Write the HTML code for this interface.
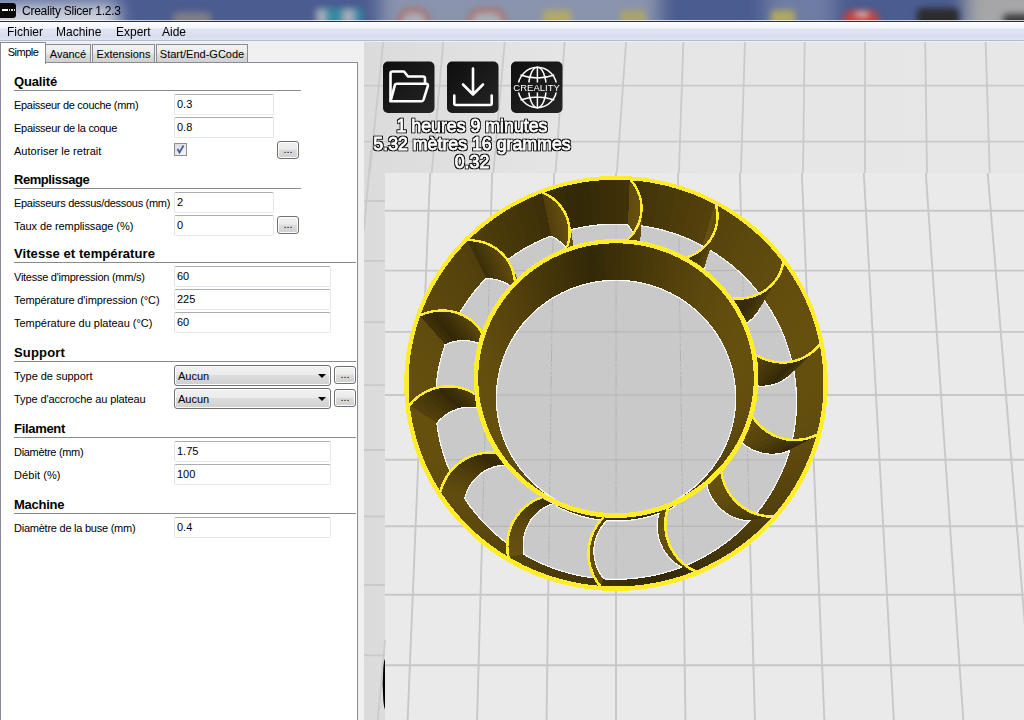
<!DOCTYPE html>
<html lang="fr">
<head>
<meta charset="utf-8">
<title>Creality Slicer 1.2.3</title>
<style>
*{box-sizing:border-box;margin:0;padding:0}
html,body{width:1024px;height:720px;overflow:hidden;background:#f0f0f0}
body{position:relative;font-family:"Liberation Sans",sans-serif;font-size:11px;color:#000}
.abs{position:absolute}
#titlebar{position:absolute;left:0;top:0;width:1024px;height:22px;overflow:hidden;background:#4b5c90}
#tbblobs,#tbbase{position:absolute;left:0;top:0;width:1024px;height:22px;filter:blur(3px)}
#tbbase{filter:blur(9px)}
#tbbase i{position:absolute;display:block}
#tbblobs i{position:absolute;display:block}
#tbline{position:absolute;left:0;top:20px;width:1024px;height:2px;background:linear-gradient(rgba(255,255,255,.75) 0,rgba(255,255,255,.75) 1px,#2e3038 1px,#2e3038 2px)}
#title{position:absolute;left:22px;top:3px;font-size:12px;line-height:16px;letter-spacing:-0.25px;color:#000;white-space:nowrap}
#appicon{position:absolute;left:-2px;top:3px;width:18px;height:15px;background:#0a0a0a;border-radius:3px}
#appicon:before{content:"";position:absolute;left:4px;top:6px;width:6px;height:2px;background:#fff}
#appicon:after{content:"";position:absolute;left:11px;top:6px;width:6px;height:2px;background:linear-gradient(90deg,#ddd 0,#ddd 1.500px,transparent 1.500px,transparent 2.500px,#ddd 2.500px,#ddd 4px,transparent 4px,transparent 5px,#ddd 5px)}
#menubar{position:absolute;left:0;top:22px;width:1024px;height:19px;background:linear-gradient(#fcfdff 0,#f3f5fc 6px,#e1e5f3 7px,#d9deef 14px,#dde2f1 17px,#dfe4f2 18px,#b4bbd0 18px,#b4bbd0 19px)}
#menubar span{position:absolute;top:3px;font-size:12px;line-height:14px;white-space:nowrap}
#tabs{position:absolute;left:0;top:41px;width:364px;height:22px;background:#f0f0f0}
.tab{position:absolute;top:3px;height:19px;border:1px solid #898c95;border-bottom:none;background:linear-gradient(#f2f2f2 0,#ebebeb 8px,#dddddd 9px,#cfcfcf 100%);font-size:11px;line-height:15px;text-align:center;white-space:nowrap;padding-top:2px}
.tab.sel{top:1px;height:22px;background:#fff;z-index:2;padding-top:2px}
#panel{position:absolute;left:0;top:62px;width:358px;height:658px;background:#fff;border:1px solid #898c95;border-bottom:none}
.h{position:absolute;left:14px;margin-top:1px;font-weight:bold;font-size:13px;line-height:16px;white-space:nowrap}
.hl{position:absolute;left:14px;height:1px;background:#8a8a8a}
.l{position:absolute;left:14px;font-size:11px;line-height:14px;white-space:nowrap;letter-spacing:-0.29px}
.in{position:absolute;left:174px;height:21px;border:1px solid #e3e9ef;border-top-color:#abadb3;border-left-color:#e2e3ea;border-radius:2px;background:#fff;font-size:11px;line-height:14px;padding:2px 0 0 2px;white-space:nowrap}
.w1{width:100px}.w2{width:157px}
.btn{position:absolute;width:22px;height:18px;border:1px solid #707070;border-radius:3px;background:linear-gradient(#f2f2f2 0,#ebebeb 45%,#dddddd 50%,#cfcfcf 100%);box-shadow:inset 0 0 0 1px #fcfcfc;font-size:11px;line-height:15px;text-align:center}
.sel2{position:absolute;left:174px;width:157px;height:21px;border:1px solid #707070;border-radius:3px;background:linear-gradient(#f2f2f2 0,#ebebeb 45%,#dddddd 50%,#cfcfcf 100%);box-shadow:inset 0 0 0 1px #fcfcfc;font-size:11px;line-height:14px;padding:3px 0 0 3px}
.sel2:after{content:"";position:absolute;right:4px;top:8px;border:4px solid transparent;border-top:4px solid #000;border-bottom:none}
#view{overflow:hidden}
</style>
</head>
<body>
<div id="titlebar">
  <div id="tbbase">
    <i style="left:-30px;top:3px;width:148px;height:60px;background:#d0d4de"></i>
    <i style="left:380px;top:-20px;width:280px;height:60px;background:#8a94ad"></i>
    <i style="left:765px;top:-20px;width:70px;height:60px;background:#6f7ca4"></i>
    <i style="left:965px;top:-20px;width:90px;height:60px;background:#a6a6a8"></i>
  </div>
  <div id="tbblobs">
    <i style="left:172px;top:12px;width:40px;height:16px;background:#7f7f86;border-radius:8px"></i>
    <i style="left:318px;top:8px;width:44px;height:18px;background:#3689a2;border-radius:4px"></i>
    <i style="left:316px;top:9px;width:11px;height:16px;background:#a4abb6"></i>
    <i style="left:342px;top:9px;width:13px;height:16px;background:#a4abb6"></i>
    <i style="left:398px;top:8px;width:32px;height:26px;background:#a9adb8;border:4px solid #ad6a64;border-radius:14px"></i>
    <i style="left:468px;top:8px;width:38px;height:26px;background:#a9adb8;border:4px solid #ad6a64;border-radius:14px"></i>
    <i style="left:543px;top:10px;width:28px;height:16px;background:#b1aa66;border-radius:3px"></i>
    <i style="left:620px;top:10px;width:26px;height:16px;background:#a8a36e;border-radius:3px"></i>
    <i style="left:771px;top:10px;width:24px;height:16px;background:#aea862;border-radius:3px"></i>
    <i style="left:843px;top:10px;width:36px;height:18px;background:#bd4540;border-radius:9px"></i>
    <i style="left:855px;top:12px;width:14px;height:5px;background:#e0c4c0;border-radius:3px"></i>
    <i style="left:917px;top:8px;width:42px;height:18px;background:#2c2c2e;border-radius:5px"></i>
    <i style="left:1003px;top:14px;width:30px;height:12px;background:#3c3c3e;border-radius:5px"></i>
  </div>
  <div id="tbline"></div>
  <div id="appicon"></div>
  <div id="title">Creality Slicer 1.2.3</div>
</div>
<div id="menubar">
  <span style="left:7px">Fichier</span>
  <span style="left:56px">Machine</span>
  <span style="left:116px">Expert</span>
  <span style="left:162px">Aide</span>
</div>
<div id="tabs">
  <div class="tab sel" style="left:0;width:46px;letter-spacing:-0.5px">Simple</div>
  <div class="tab" style="left:45px;width:46px">Avancé</div>
  <div class="tab" style="left:92px;width:63px">Extensions</div>
  <div class="tab" style="left:156px;width:92px">Start/End-GCode</div>
</div>
<div id="panel"></div>
<div id="form">
  <div class="h" style="top:73px;letter-spacing:-0.15px">Qualité</div><div class="hl" style="top:90px;width:287px"></div>
  <div class="l" style="top:98px;letter-spacing:-0.3px">Epaisseur de couche (mm)</div><div class="in w1" style="top:94px">0.3</div>
  <div class="l" style="top:121px;letter-spacing:-0.28px">Epaisseur de la coque</div><div class="in w1" style="top:117px">0.8</div>
  <div class="l" style="top:144px;letter-spacing:0.03px">Autoriser le retrait</div>
  <div class="abs" id="chk" style="left:174px;top:143px;width:13px;height:13px;border:1px solid #8e8f8f;background:linear-gradient(135deg,#d8dce0,#f6f6f6)"><svg width="11" height="11" viewBox="0 0 11 11" style="position:absolute;left:0;top:0"><path d="M2.5 5 L4.5 8.5 L8.5 1.5" fill="none" stroke="#4a5f97" stroke-width="1.8"/></svg></div>
  <div class="btn" style="left:277px;top:141px">...</div>

  <div class="h" style="top:171px;letter-spacing:-0.45px">Remplissage</div><div class="hl" style="top:188px;width:287px"></div>
  <div class="l" style="top:196px;letter-spacing:-0.3px">Epaisseurs dessus/dessous (mm)</div><div class="in w1" style="top:192px">2</div>
  <div class="l" style="top:219px;letter-spacing:-0.08px">Taux de remplissage (%)</div><div class="in w1" style="top:215px">0</div>
  <div class="btn" style="left:277px;top:216px">...</div>

  <div class="h" style="top:245px;letter-spacing:0.08px">Vitesse et température</div><div class="hl" style="top:262px;width:342px"></div>
  <div class="l" style="top:270px;letter-spacing:-0.26px">Vitesse d'impression (mm/s)</div><div class="in w2" style="top:266px">60</div>
  <div class="l" style="top:293px;letter-spacing:-0.12px">Température d'impression (°C)</div><div class="in w2" style="top:289px">225</div>
  <div class="l" style="top:316px;letter-spacing:-0.02px">Température du plateau (°C)</div><div class="in w2" style="top:312px">60</div>

  <div class="h" style="top:344px;letter-spacing:0.17px">Support</div><div class="hl" style="top:361px;width:342px"></div>
  <div class="l" style="top:369px;letter-spacing:-0.03px">Type de support</div><div class="sel2" style="top:365px">Aucun</div><div class="btn" style="left:334px;top:366px">...</div>
  <div class="l" style="top:392px;letter-spacing:-0.1px">Type d'accroche au plateau</div><div class="sel2" style="top:388px">Aucun</div><div class="btn" style="left:334px;top:389px">...</div>

  <div class="h" style="top:420px;letter-spacing:-0.31px">Filament</div><div class="hl" style="top:437px;width:342px"></div>
  <div class="l" style="top:445px;letter-spacing:-0.31px">Diamètre (mm)</div><div class="in w2" style="top:441px">1.75</div>
  <div class="l" style="top:468px;letter-spacing:0.07px">Débit (%)</div><div class="in w2" style="top:464px">100</div>

  <div class="h" style="top:496px;letter-spacing:-0.25px">Machine</div><div class="hl" style="top:513px;width:342px"></div>
  <div class="l" style="top:521px;letter-spacing:-0.24px">Diamètre de la buse (mm)</div><div class="in w2" style="top:517px">0.4</div>
</div>
<svg id="view" width="660" height="679" viewBox="364 41 660 679" style="position:absolute;left:364px;top:41px;display:block;will-change:transform">
<defs><linearGradient id="bgA" x1="0" x2="1" y1="0" y2="0"><stop offset="0" stop-color="#dbdbdb"/><stop offset="0.12" stop-color="#dfdfdf"/><stop offset="0.3" stop-color="#e5e5e5"/><stop offset="1" stop-color="#e7e7e7"/></linearGradient>
<linearGradient id="btn" x1="0" x2="1" y1="0" y2="1"><stop offset="0" stop-color="#0e0e0e"/><stop offset="1" stop-color="#262626"/></linearGradient></defs>
<rect x="364" y="41" width="660" height="679" fill="url(#bgA)"/>
<rect x="385" y="173" width="639" height="547" fill="#eaeaea"/>
<clipPath id="pl"><rect x="385" y="173" width="639" height="547"/></clipPath>
<path d="M385 210.8H1024M385 270.6H1024M385 331.9H1024M385 395.0H1024M385 459.8H1024M385 526.3H1024M385 594.8H1024M385 665.2H1024M369.3 152.5L337.2 737.6M431.0 152.5L406.9 737.6M492.7 152.5L476.6 737.6M554.3 152.5L546.3 737.6M616.0 152.5L616.0 737.6M677.7 152.5L685.7 737.6M739.3 152.5L755.4 737.6M801.0 152.5L825.1 737.6M862.7 152.5L894.8 737.6M924.4 152.5L964.5 737.6M986.0 152.5L1034.2 737.6" stroke="#c8c8c8" stroke-width="1.9" fill="none" clip-path="url(#pl)"/>
<path d="M364 85.7H1024M364 141.7H1024M383.4 41L369.7 173M443.4 41L431.7 173M504.8 41L493.3 173M564.6 41L555.5 173M626.1 41L616.8 173M683.4 41L678.9 173M745.0 41L740.9 173M804.7 41L803.0 173M865.1 41L865.0 173M925.2 41L927.0 173M985.6 41L989.7 173M364 201.0H385M364 260.8H385M364 322.1H385M364 385.2H385M364 450.0H385M364 516.5H385M364 585.0H385M364 655.4H385M371 150L364 230M385 640L377.8 720" stroke="#cacaca" stroke-width="1.8" fill="none"/>
<path d="M385 659Q384 660 383.300 668Q382 684 383.300 700Q384 708 385 709.500Z" fill="#000"/>
<rect x="364" y="41" width="660" height="1" fill="#efefef"/>
<g id="obj">
<clipPath id="fl"><polygon points="800.8,395.0 799.9,383.1 798.3,371.4 795.9,359.8 792.7,348.4 788.8,337.3 784.2,326.5 778.9,316.0 773.0,305.9 766.4,296.2 759.2,286.9 751.5,278.2 743.2,269.9 734.4,262.3 725.2,255.1 715.5,248.6 705.4,242.7 695.0,237.5 684.3,232.9 673.3,229.0 662.1,225.8 650.7,223.3 639.2,221.5 627.6,220.4 616.0,220.1 604.4,220.4 592.8,221.5 581.3,223.3 569.9,225.8 558.7,229.0 547.7,232.9 537.0,237.5 526.6,242.7 516.5,248.6 506.8,255.1 497.6,262.3 488.8,269.9 480.5,278.2 472.8,286.9 465.6,296.2 459.0,305.9 453.1,316.0 447.8,326.5 443.2,337.3 439.3,348.4 436.1,359.8 433.7,371.4 432.1,383.1 431.2,395.0 431.2,406.9 431.9,418.8 433.4,430.7 435.7,442.5 438.9,454.1 442.8,465.5 447.4,476.7 452.9,487.6 459.0,498.1 465.9,508.2 473.5,517.9 481.7,527.0 490.6,535.6 500.0,543.6 510.0,551.0 520.4,557.7 531.4,563.7 542.7,569.0 554.4,573.5 566.3,577.2 578.5,580.1 590.9,582.2 603.4,583.5 616.0,583.9 628.6,583.5 641.1,582.2 653.5,580.1 665.7,577.2 677.6,573.5 689.3,569.0 700.6,563.7 711.6,557.7 722.0,551.0 732.0,543.6 741.4,535.6 750.3,527.0 758.5,517.9 766.1,508.2 773.0,498.1 779.1,487.6 784.6,476.7 789.2,465.5 793.1,454.1 796.3,442.5 798.6,430.7 800.1,418.8 800.8,406.9"/></clipPath>
<polygon points="800.8,395.0 799.9,383.1 798.3,371.4 795.9,359.8 792.7,348.4 788.8,337.3 784.2,326.5 778.9,316.0 773.0,305.9 766.4,296.2 759.2,286.9 751.5,278.2 743.2,269.9 734.4,262.3 725.2,255.1 715.5,248.6 705.4,242.7 695.0,237.5 684.3,232.9 673.3,229.0 662.1,225.8 650.7,223.3 639.2,221.5 627.6,220.4 616.0,220.1 604.4,220.4 592.8,221.5 581.3,223.3 569.9,225.8 558.7,229.0 547.7,232.9 537.0,237.5 526.6,242.7 516.5,248.6 506.8,255.1 497.6,262.3 488.8,269.9 480.5,278.2 472.8,286.9 465.6,296.2 459.0,305.9 453.1,316.0 447.8,326.5 443.2,337.3 439.3,348.4 436.1,359.8 433.7,371.4 432.1,383.1 431.2,395.0 431.2,406.9 431.9,418.8 433.4,430.7 435.7,442.5 438.9,454.1 442.8,465.5 447.4,476.7 452.9,487.6 459.0,498.1 465.9,508.2 473.5,517.9 481.7,527.0 490.6,535.6 500.0,543.6 510.0,551.0 520.4,557.7 531.4,563.7 542.7,569.0 554.4,573.5 566.3,577.2 578.5,580.1 590.9,582.2 603.4,583.5 616.0,583.9 628.6,583.5 641.1,582.2 653.5,580.1 665.7,577.2 677.6,573.5 689.3,569.0 700.6,563.7 711.6,557.7 722.0,551.0 732.0,543.6 741.4,535.6 750.3,527.0 758.5,517.9 766.1,508.2 773.0,498.1 779.1,487.6 784.6,476.7 789.2,465.5 793.1,454.1 796.3,442.5 798.6,430.7 800.1,418.8 800.8,406.9" fill="#c9c9c9"/>
<g clip-path="url(#fl)" fill="none" stroke="#b4b4b4" stroke-width="1"><path d="M412.8 594.8L819.2 594.8M415.6 526.3L816.4 526.3M418.3 459.8L813.7 459.8M421.0 395.0L811.0 395.0M423.6 331.9L808.4 331.9M426.1 270.6L805.9 270.6M428.6 210.8L803.4 210.8"/><path d="M428.6 210.8L412.8 594.8M491.1 210.8L480.5 594.8M553.5 210.8L548.3 594.8M616.0 210.8L616.0 594.8M678.5 210.8L683.7 594.8M740.9 210.8L751.5 594.8M803.4 210.8L819.2 594.8" stroke-dasharray="14 1.500 3 1.500 1.500 1.500 3 1.500"/></g>
<path d="M616.0 223.5L623.6 223.7M608.4 223.7L616.0 223.5M623.6 223.7L631.2 224.1M600.8 224.1L608.4 223.7M593.2 224.9L600.8 224.1M631.2 224.1L638.8 224.9M638.8 224.9L646.3 226.0M585.7 226.0L593.2 224.9M646.3 226.0L653.8 227.4M578.2 227.4L585.7 226.0M653.8 227.4L661.2 229.1M570.8 229.1L578.2 227.4M630.5 227.5L628.0 224.3M661.2 229.1L668.5 231.2M563.5 231.2L570.8 229.1M668.5 231.2L675.8 233.5M556.2 233.5L563.5 231.2M675.8 233.5L682.9 236.1M549.1 236.1L556.2 233.5M632.7 230.9L630.5 227.5M682.9 236.1L690.0 239.0M542.0 239.0L549.1 236.1M555.0 237.5L551.3 235.7M690.0 239.0L696.9 242.2M535.1 242.2L542.0 239.0M634.5 234.6L632.7 230.9M696.9 242.2L703.6 245.7M528.4 245.7L535.1 242.2M558.5 239.8L555.0 237.5M703.6 245.7L710.3 249.5M521.7 249.5L528.4 245.7M703.4 249.6L702.5 245.6M635.8 238.4L634.5 234.6M710.3 249.5L716.7 253.6M515.3 253.6L521.7 249.5M561.8 242.3L558.5 239.8M716.7 253.6L723.0 257.9M509.0 257.9L515.3 253.6M703.9 253.6L703.4 249.6M564.7 245.2L561.8 242.3M636.8 242.4L635.8 238.4M723.0 257.9L729.1 262.5M502.9 262.5L509.0 257.9M497.0 267.3L502.9 262.5M729.1 262.5L735.0 267.3M567.3 248.4L564.7 245.2M703.9 257.7L703.9 253.6M637.3 246.4L636.8 242.4M735.0 267.3L740.7 272.4M491.3 272.4L497.0 267.3M569.5 251.9L567.3 248.4M703.4 261.7L703.9 257.7M740.7 272.4L746.1 277.8M485.9 277.8L491.3 272.4M637.3 250.4L637.3 246.4M490.5 278.1L486.2 278.0M746.1 277.8L751.4 283.3M480.6 283.3L485.9 277.8M571.3 255.5L569.5 251.9M702.5 265.7L703.4 261.7M494.7 278.7L490.5 278.1M639.0 254.8L639.4 250.5M751.4 283.3L756.4 289.1M475.6 289.1L480.6 283.3M498.8 279.7L494.7 278.7M572.7 259.3L571.3 255.5M703.2 270.3L704.6 266.3M756.4 289.1L761.1 295.1M470.9 295.1L475.6 289.1M638.1 259.0L639.0 254.8M502.8 281.1L498.8 279.7M761.1 295.1L765.6 301.3M466.4 301.3L470.9 295.1M573.7 263.3L572.7 259.3M701.3 274.2L703.2 270.3M760.5 300.2L761.5 296.2M506.6 282.9L502.8 281.1M636.7 263.0L638.1 259.0M765.6 301.3L769.9 307.7M462.1 307.7L466.4 301.3M576.4 267.2L575.8 262.9M510.2 285.1L506.6 282.9M759.1 304.1L760.5 300.2M699.0 277.9L701.3 274.2M769.9 307.7L773.8 314.2M458.2 314.2L462.1 307.7M634.8 267.0L636.7 263.0M513.5 287.6L510.2 285.1M576.4 271.5L576.4 267.2M757.3 307.8L759.1 304.1M696.3 281.3L699.0 277.9M773.8 314.2L777.5 321.0M454.5 321.0L458.2 314.2M632.6 270.7L634.8 267.0M516.5 290.5L513.5 287.6M576.0 275.8L576.4 271.5M777.5 321.0L780.8 327.9M451.2 327.9L454.5 321.0M756.9 312.6L759.2 308.9M693.2 284.4L696.3 281.3M629.9 274.1L632.6 270.7M519.1 293.7L516.5 290.5M780.8 327.9L783.9 334.9M448.1 334.9L451.2 327.9M575.1 280.0L576.0 275.8M689.8 287.2L693.2 284.4M626.9 277.3L629.9 274.1M754.1 316.0L756.9 312.6M521.4 297.2L519.1 293.7M445.3 342.1L448.1 334.9M783.9 334.9L786.7 342.1M686.1 289.6L689.8 287.2M573.8 284.2L575.1 280.0M616.0 279.6L621.1 279.8M610.9 279.8L616.0 279.6M751.0 319.1L754.1 316.0M621.1 279.8L626.2 280.1M605.8 280.1L610.9 279.8M626.2 280.1L631.3 280.6M600.7 280.6L605.8 280.1M631.3 280.6L636.4 281.4M595.6 281.4L600.7 280.6M636.4 281.4L641.4 282.3M590.6 282.3L595.6 281.4M641.4 282.3L646.4 283.5M585.6 283.5L590.6 282.3M682.1 291.6L686.1 289.6M523.3 300.9L521.4 297.2M786.7 342.1L789.1 349.4M442.9 349.4L445.3 342.1M449.0 342.5L445.0 344.2M646.4 283.5L651.3 284.9M580.7 284.9L585.6 283.5M651.3 284.9L656.2 286.4M575.8 286.4L580.7 284.9M453.2 341.2L449.0 342.5M656.2 286.4L661.0 288.2M571.0 288.2L575.8 286.4M747.5 321.8L751.0 319.1M677.9 293.3L682.1 291.6M661.0 288.2L665.7 290.2M566.3 290.2L571.0 288.2M457.5 340.4L453.2 341.2M789.1 349.4L791.3 356.8M440.7 356.8L442.9 349.4M526.8 304.1L525.3 300.0M665.7 290.2L670.3 292.4M561.7 292.4L566.3 290.2M670.3 292.4L674.9 294.8M557.1 294.8L561.7 292.4M461.8 339.9L457.5 340.4M743.7 324.2L747.5 321.8M674.9 294.8L679.3 297.3M552.7 297.3L557.1 294.8M466.1 340.0L461.8 339.9M791.3 356.8L793.1 364.3M438.9 364.3L440.7 356.8M679.3 297.3L683.6 300.1M548.4 300.1L552.7 297.3M527.9 308.3L526.8 304.1M739.7 326.2L743.7 324.2M683.6 300.1L687.8 303.0M544.2 303.0L548.4 300.1M470.4 340.5L466.1 340.0M687.8 303.0L691.8 306.1M540.2 306.1L544.2 303.0M793.1 364.3L794.6 371.9M437.4 371.9L438.9 364.3M528.5 312.6L527.9 308.3M735.5 327.7L739.7 326.2M691.8 306.1L695.8 309.4M536.2 309.4L540.2 306.1M474.6 341.4L470.4 340.5M790.6 370.9L793.3 367.7M695.8 309.4L699.6 312.8M532.4 312.8L536.2 309.4M794.6 371.9L795.7 379.5M436.3 379.5L437.4 371.9M731.1 328.8L735.5 327.7M478.7 342.7L474.6 341.4M699.6 312.8L703.2 316.4M528.8 316.4L532.4 312.8M787.6 373.9L790.6 370.9M726.6 329.4L731.1 328.8M703.2 316.4L706.7 320.2M525.3 320.2L528.8 316.4M482.6 344.5L478.7 342.7M795.7 379.5L796.5 387.2M435.5 387.2L436.3 379.5M722.0 329.6L726.6 329.4M706.7 320.2L710.0 324.1M522.0 324.1L525.3 320.2M785.5 378.2L789.1 375.5M717.5 329.2L722.0 329.6M486.2 346.7L482.6 344.5M710.0 324.1L713.1 328.1M518.9 328.1L522.0 324.1M796.5 387.2L797.0 395.0M435.0 395.0L435.5 387.2M713.1 328.1L716.1 332.3M515.9 332.3L518.9 328.1M781.7 380.6L785.5 378.2M489.6 349.3L486.2 346.7M716.1 332.3L718.9 336.6M513.1 336.6L515.9 332.3M797.0 395.0L797.1 402.8M434.9 402.8L435.0 395.0M777.6 382.5L781.7 380.6M492.7 352.2L489.6 349.3M718.9 336.6L721.5 341.0M510.5 341.0L513.1 336.6M797.1 402.8L796.9 410.6M435.1 410.6L434.9 402.8M721.5 341.0L723.9 345.6M508.1 345.6L510.5 341.0M773.3 384.0L777.6 382.5M495.5 355.4L492.7 352.2M723.9 345.6L726.1 350.2M505.9 350.2L508.1 345.6M768.8 385.0L773.3 384.0M796.9 410.6L796.3 418.3M435.7 418.3L435.1 410.6M497.8 358.9L495.5 355.4M726.1 350.2L728.0 354.9M504.0 354.9L505.9 350.2M764.3 385.6L768.8 385.0M502.2 359.7L504.0 354.9M728.0 354.9L729.8 359.7M796.3 418.3L795.4 426.1M436.6 426.1L435.7 418.3M439.6 419.3L436.6 422.6M442.9 416.3L439.6 419.3M759.6 385.6L764.3 385.6M729.8 359.7L731.4 364.6M500.6 364.6L502.2 359.7M446.5 413.7L442.9 416.3M450.3 411.4L446.5 413.7M755.0 385.2L759.6 385.6M795.4 426.1L794.2 433.8M437.8 433.8L436.6 426.1M731.4 364.6L732.8 369.5M499.2 369.5L500.6 364.6M454.3 409.6L450.3 411.4M750.5 384.3L755.0 385.2M458.5 408.1L454.3 409.6M732.8 369.5L733.9 374.6M498.1 374.6L499.2 369.5M746.1 382.9L750.5 384.3M794.2 433.8L792.5 441.5M439.5 441.5L437.8 433.8M462.9 407.2L458.5 408.1M741.8 381.1L746.1 382.9M737.7 378.9L741.8 381.1M733.9 374.6L734.8 379.6M497.2 379.6L498.1 374.6M467.2 406.6L462.9 407.2M441.4 449.1L439.5 441.5M792.5 441.5L790.6 449.1M471.6 406.6L467.2 406.6M734.8 379.6L735.5 384.7M496.5 384.7L497.2 379.6M787.6 450.7L791.8 448.9M476.0 407.0L471.6 406.6M735.5 384.7L736.0 389.8M496.0 389.8L496.5 384.7M790.6 449.1L788.3 456.6M443.7 456.6L441.4 449.1M480.3 407.9L476.0 407.0M783.2 452.2L787.6 450.7M736.0 389.8L736.3 395.0M495.7 395.0L496.0 389.8M446.3 464.1L443.7 456.6M788.3 456.6L785.7 464.1M484.4 409.2L480.3 407.9M736.3 395.0L736.3 400.2M495.7 400.2L495.7 395.0M778.7 453.1L783.2 452.2M488.4 410.9L484.4 409.2M785.7 464.1L782.7 471.4M449.3 471.4L446.3 464.1M736.3 400.2L736.1 405.3M495.9 405.3L495.7 400.2M774.0 453.6L778.7 453.1M492.2 413.1L488.4 410.9M736.1 405.3L735.6 410.5M496.4 410.5L495.9 405.3M769.4 453.5L774.0 453.6M782.7 471.4L779.4 478.6M452.6 478.6L449.3 471.4M735.6 410.5L734.9 415.6M497.1 415.6L496.4 410.5M764.7 453.0L769.4 453.5M779.4 478.6L775.7 485.7M456.3 485.7L452.6 478.6M760.1 452.0L764.7 453.0M734.9 415.6L734.0 420.7M498.0 420.7L497.1 415.6M755.6 450.5L760.1 452.0M734.0 420.7L732.9 425.8M499.1 425.8L498.0 420.7M775.7 485.7L771.8 492.6M460.2 492.6L456.3 485.7M751.3 448.5L755.6 450.5M747.3 446.1L751.3 448.5M500.4 430.8L499.1 425.8M732.9 425.8L731.6 430.8M743.5 443.3L747.3 446.1M464.5 499.3L460.2 492.6M771.8 492.6L767.5 499.3M740.0 440.2L743.5 443.3M734.1 432.8L736.9 436.6M736.9 436.6L740.0 440.2M465.5 493.7L464.2 498.0M467.2 489.5L465.5 493.7M731.6 430.8L730.0 435.8M502.0 435.8L500.4 430.8M469.3 485.5L467.2 489.5M471.8 481.7L469.3 485.5M474.8 478.3L471.8 481.7M767.5 499.3L763.0 505.9M469.0 505.9L464.5 499.3M478.0 475.1L474.8 478.3M730.0 435.8L728.2 440.7M503.8 440.7L502.0 435.8M481.6 472.3L478.0 475.1M485.4 469.9L481.6 472.3M763.0 505.9L758.1 512.2M473.9 512.2L469.0 505.9M728.2 440.7L726.1 445.5M505.9 445.5L503.8 440.7M489.4 468.0L485.4 469.9M493.6 466.4L489.4 468.0M726.1 445.5L723.9 450.2M508.1 450.2L505.9 445.5M758.1 512.2L752.9 518.3M479.1 518.3L473.9 512.2M498.0 465.3L493.6 466.4M502.4 464.7L498.0 465.3M723.9 450.2L721.5 454.9M510.5 454.9L508.1 450.2M747.9 520.2L752.6 520.4M752.9 518.3L747.5 524.3M484.5 524.3L479.1 518.3M506.9 464.5L502.4 464.7M721.5 454.9L718.8 459.4M513.2 459.4L510.5 454.9M743.2 519.6L747.9 520.2M511.3 464.8L506.9 464.5M747.5 524.3L741.8 529.9M490.2 529.9L484.5 524.3M718.8 459.4L715.9 463.8M516.1 463.8L513.2 459.4M738.6 518.4L743.2 519.6M741.8 529.9L735.8 535.3M496.2 535.3L490.2 529.9M519.1 468.1L516.1 463.8M715.9 463.8L712.9 468.1M734.1 516.8L738.6 518.4M729.8 514.7L734.1 516.8M712.9 468.1L709.6 472.2M522.4 472.2L519.1 468.1M735.8 535.3L729.6 540.5M502.4 540.5L496.2 535.3M725.7 512.1L729.8 514.7M709.6 472.2L706.2 476.2M525.8 476.2L522.4 472.2M721.9 509.2L725.7 512.1M729.6 540.5L723.1 545.4M508.9 545.4L502.4 540.5M718.5 505.8L721.9 509.2M706.2 476.2L702.6 480.1M529.4 480.1L525.8 476.2M706.6 480.3L707.4 485.0M715.4 502.1L718.5 505.8M707.4 485.0L708.7 489.5M712.7 498.2L715.4 502.1M708.7 489.5L710.5 494.0M710.5 494.0L712.7 498.2M723.1 545.4L716.4 550.0M515.6 550.0L508.9 545.4M702.6 480.1L698.8 483.8M533.2 483.8L529.4 480.1M716.4 550.0L709.5 554.3M522.5 554.3L515.6 550.0M698.8 483.8L694.8 487.3M537.2 487.3L533.2 483.8M522.5 545.3L522.9 549.9M522.9 549.9L523.6 554.4M522.7 540.8L522.5 545.3M523.4 536.2L522.7 540.8M524.5 531.8L523.4 536.2M709.5 554.3L702.5 558.3M529.5 558.3L522.5 554.3M694.8 487.3L690.7 490.7M541.3 490.7L537.2 487.3M526.1 527.5L524.5 531.8M528.1 523.4L526.1 527.5M530.5 519.5L528.1 523.4M533.3 515.9L530.5 519.5M690.7 490.7L686.4 493.9M545.6 493.9L541.3 490.7M702.5 558.3L695.2 561.9M536.8 561.9L529.5 558.3M536.5 512.7L533.3 515.9M540.0 509.7L536.5 512.7M686.4 493.9L682.0 496.9M550.0 496.9L545.6 493.9M543.8 507.2L540.0 509.7M695.2 561.9L687.8 565.3M544.2 565.3L536.8 561.9M547.8 505.1L543.8 507.2M682.0 496.9L677.5 499.6M554.5 499.6L550.0 496.9M552.0 503.5L547.8 505.1M687.8 565.3L680.2 568.3M551.8 568.3L544.2 565.3M680.2 565.7L684.4 567.9M680.2 568.3L672.4 571.0M559.6 571.0L551.8 568.3M676.1 563.0L680.2 565.7M674.7 505.9L669.8 508.4M562.2 508.4L557.3 505.9M672.4 559.9L676.1 563.0M672.4 571.0L664.6 573.3M567.4 573.3L559.6 571.0M669.8 508.4L664.7 510.7M567.3 510.7L562.2 508.4M669.1 556.4L672.4 559.9M664.6 573.3L656.7 575.3M575.3 575.3L567.4 573.3M666.1 552.6L669.1 556.4M664.7 510.7L659.6 512.7M572.4 512.7L567.3 510.7M656.7 575.3L648.6 577.0M583.4 577.0L575.3 575.3M663.5 548.5L666.1 552.6M660.3 511.3L658.9 515.8M591.5 578.2L583.4 577.0M648.6 577.0L640.5 578.2M659.6 512.7L654.3 514.5M577.7 514.5L572.4 512.7M661.4 544.1L663.5 548.5M658.9 515.8L658.1 520.5M640.5 578.2L632.4 579.1M599.6 579.1L591.5 578.2M659.7 539.6L661.4 544.1M658.1 520.5L657.7 525.3M658.6 534.9L659.7 539.6M632.4 579.1L624.2 579.7M607.8 579.7L599.6 579.1M657.7 525.3L657.9 530.1M657.9 530.1L658.6 534.9M654.3 514.5L649.0 516.1M583.0 516.1L577.7 514.5M624.2 579.7L616.0 579.9M616.0 579.9L607.8 579.7M600.4 575.2L603.1 579.0M598.1 571.2L600.4 575.2M649.0 516.1L643.6 517.4M588.4 517.4L583.0 516.1M596.2 567.0L598.1 571.2M594.8 562.6L596.2 567.0M643.6 517.4L638.1 518.5M593.9 518.5L588.4 517.4M593.8 558.1L594.8 562.6M593.3 553.6L593.8 558.1M638.1 518.5L632.7 519.3M599.3 519.3L593.9 518.5M593.3 549.0L593.3 553.6M593.8 544.4L593.3 549.0M632.7 519.3L627.1 519.9M604.9 519.9L599.3 519.3M594.8 539.9L593.8 544.4M596.2 535.6L594.8 539.9M598.1 531.4L596.2 535.6M627.1 519.9L621.6 520.3M610.4 520.3L604.9 519.9M606.1 520.5L603.1 523.8M600.4 527.5L598.1 531.4M603.1 523.8L600.4 527.5M621.6 520.3L616.0 520.4M616.0 520.4L610.4 520.3" stroke="#fff" stroke-width="2.2" stroke-linecap="round" fill="none"/>
<g shape-rendering="crispEdges">
<path d="M616.0 223.5L623.6 223.7L624.7 180.0L616.0 179.8Z" fill="#3e3109"/>
<path d="M608.4 223.7L616.0 223.5L616.0 179.8L607.3 180.0Z" fill="#3c2f08"/>
<path d="M623.6 223.7L631.2 224.1L633.3 180.5L624.7 180.0Z" fill="#403209"/>
<path d="M600.8 224.1L608.4 223.7L607.3 180.0L598.7 180.5Z" fill="#3a2d08"/>
<path d="M593.2 224.9L600.8 224.1L598.7 180.5L590.1 181.4Z" fill="#372c08"/>
<path d="M631.2 224.1L638.8 224.9L641.9 181.4L633.3 180.5Z" fill="#423409"/>
<path d="M638.8 224.9L646.3 226.0L650.5 182.6L641.9 181.4Z" fill="#44360a"/>
<path d="M585.7 226.0L593.2 224.9L590.1 181.4L581.5 182.6Z" fill="#352a08"/>
<path d="M646.3 226.0L653.8 227.4L659.1 184.2L650.5 182.6Z" fill="#46370a"/>
<path d="M578.2 227.4L585.7 226.0L581.5 182.6L572.9 184.2Z" fill="#332807"/>
<path d="M653.8 227.4L661.2 229.1L667.5 186.2L659.1 184.2Z" fill="#48390a"/>
<path d="M570.8 229.1L578.2 227.4L572.9 184.2L564.5 186.2Z" fill="#352a08"/>
<path d="M630.5 227.5L628.0 224.3L629.7 180.7L632.6 184.3Z" fill="#604c0e"/>
<path d="M661.2 229.1L668.5 231.2L675.9 188.4L667.5 186.2Z" fill="#4a3a0a"/>
<path d="M563.5 231.2L570.8 229.1L564.5 186.2L556.1 188.4Z" fill="#372c08"/>
<path d="M668.5 231.2L675.8 233.5L684.1 191.1L675.9 188.4Z" fill="#4c3c0b"/>
<path d="M556.2 233.5L563.5 231.2L556.1 188.4L547.9 191.1Z" fill="#392d08"/>
<path d="M675.8 233.5L682.9 236.1L692.3 194.0L684.1 191.1Z" fill="#4e3d0b"/>
<path d="M549.1 236.1L556.2 233.5L547.9 191.1L539.7 194.0Z" fill="#3c2f08"/>
<path d="M632.7 230.9L630.5 227.5L632.6 184.3L635.0 188.2Z" fill="#624d0e"/>
<path d="M682.9 236.1L690.0 239.0L700.3 197.3L692.3 194.0Z" fill="#503f0b"/>
<path d="M542.0 239.0L549.1 236.1L539.7 194.0L531.7 197.3Z" fill="#3e3109"/>
<path d="M555.0 237.5L551.3 235.7L542.3 193.6L546.5 195.7Z" fill="#52410c"/>
<path d="M690.0 239.0L696.9 242.2L708.2 201.0L700.3 197.3Z" fill="#52400c"/>
<path d="M535.1 242.2L542.0 239.0L531.7 197.3L523.8 201.0Z" fill="#403209"/>
<path d="M634.5 234.6L632.7 230.9L635.0 188.2L637.1 192.3Z" fill="#644f0e"/>
<path d="M696.9 242.2L703.6 245.7L715.9 204.9L708.2 201.0Z" fill="#53420c"/>
<path d="M528.4 245.7L535.1 242.2L523.8 201.0L516.1 204.9Z" fill="#423409"/>
<path d="M558.5 239.8L555.0 237.5L546.5 195.7L550.5 198.2Z" fill="#56440c"/>
<path d="M703.6 245.7L710.3 249.5L723.5 209.2L715.9 204.9Z" fill="#55430c"/>
<path d="M521.7 249.5L528.4 245.7L516.1 204.9L508.5 209.2Z" fill="#44360a"/>
<path d="M703.4 249.6L702.5 245.6L714.7 204.8L715.7 209.3Z" fill="#65500e"/>
<path d="M635.8 238.4L634.5 234.6L637.1 192.3L638.6 196.7Z" fill="#654f0e"/>
<path d="M710.3 249.5L716.7 253.6L730.8 213.8L723.5 209.2Z" fill="#56440c"/>
<path d="M515.3 253.6L521.7 249.5L508.5 209.2L501.2 213.8Z" fill="#46370a"/>
<path d="M561.8 242.3L558.5 239.8L550.5 198.2L554.2 201.1Z" fill="#5a470d"/>
<path d="M716.7 253.6L723.0 257.9L738.0 218.7L730.8 213.8Z" fill="#58450c"/>
<path d="M509.0 257.9L515.3 253.6L501.2 213.8L494.0 218.7Z" fill="#48390a"/>
<path d="M703.9 253.6L703.4 249.6L715.7 209.3L716.2 213.8Z" fill="#654f0e"/>
<path d="M564.7 245.2L561.8 242.3L554.2 201.1L557.5 204.4Z" fill="#5d490d"/>
<path d="M636.8 242.4L635.8 238.4L638.6 196.7L639.7 201.1Z" fill="#65500e"/>
<path d="M723.0 257.9L729.1 262.5L745.0 223.9L738.0 218.7Z" fill="#59460d"/>
<path d="M502.9 262.5L509.0 257.9L494.0 218.7L487.0 223.9Z" fill="#4a3a0a"/>
<path d="M497.0 267.3L502.9 262.5L487.0 223.9L480.3 229.3Z" fill="#4c3c0b"/>
<path d="M729.1 262.5L735.0 267.3L751.7 229.3L745.0 223.9Z" fill="#5b480d"/>
<path d="M567.3 248.4L564.7 245.2L557.5 204.4L560.5 208.0Z" fill="#604b0e"/>
<path d="M703.9 257.7L703.9 253.6L716.2 213.8L716.2 218.4Z" fill="#644f0e"/>
<path d="M637.3 246.4L636.8 242.4L639.7 201.1L640.2 205.6Z" fill="#654f0e"/>
<path d="M735.0 267.3L740.7 272.4L758.2 235.1L751.7 229.3Z" fill="#5c490d"/>
<path d="M491.3 272.4L497.0 267.3L480.3 229.3L473.8 235.1Z" fill="#4e3d0b"/>
<path d="M569.5 251.9L567.3 248.4L560.5 208.0L563.0 211.8Z" fill="#624d0e"/>
<path d="M703.4 261.7L703.9 257.7L716.2 218.4L715.7 223.0Z" fill="#624e0e"/>
<path d="M740.7 272.4L746.1 277.8L764.5 241.1L758.2 235.1Z" fill="#5d490d"/>
<path d="M485.9 277.8L491.3 272.4L473.8 235.1L467.5 241.1Z" fill="#503f0b"/>
<path d="M637.3 250.4L637.3 246.4L640.2 205.6L640.3 210.2Z" fill="#644f0e"/>
<path d="M490.5 278.1L486.2 278.0L467.9 241.4L472.8 241.5Z" fill="#3e3109"/>
<path d="M746.1 277.8L751.4 283.3L770.5 247.4L764.5 241.1Z" fill="#5e4a0d"/>
<path d="M480.6 283.3L485.9 277.8L467.5 241.1L461.5 247.4Z" fill="#51400b"/>
<path d="M571.3 255.5L569.5 251.9L563.0 211.8L565.1 216.0Z" fill="#634e0e"/>
<path d="M702.5 265.7L703.4 261.7L715.7 223.0L714.7 227.5Z" fill="#604c0e"/>
<path d="M494.7 278.7L490.5 278.1L472.8 241.5L477.6 242.2Z" fill="#43350a"/>
<path d="M639.0 254.8L639.4 250.5L642.7 210.3L642.2 215.1Z" fill="#634e0e"/>
<path d="M751.4 283.3L756.4 289.1L776.3 254.0L770.5 247.4Z" fill="#5f4b0d"/>
<path d="M475.6 289.1L480.6 283.3L461.5 247.4L455.7 254.0Z" fill="#53420c"/>
<path d="M498.8 279.7L494.7 278.7L477.6 242.2L482.3 243.3Z" fill="#48390a"/>
<path d="M572.7 259.3L571.3 255.5L565.1 216.0L566.6 220.3Z" fill="#654f0e"/>
<path d="M703.2 270.3L704.6 266.3L717.1 228.1L715.4 232.7Z" fill="#5e4a0d"/>
<path d="M756.4 289.1L761.1 295.1L781.7 260.8L776.3 254.0Z" fill="#604c0e"/>
<path d="M470.9 295.1L475.6 289.1L455.7 254.0L450.3 260.8Z" fill="#55430c"/>
<path d="M638.1 259.0L639.0 254.8L642.2 215.1L641.2 219.9Z" fill="#614c0e"/>
<path d="M502.8 281.1L498.8 279.7L482.3 243.3L486.8 244.9Z" fill="#4d3d0b"/>
<path d="M761.1 295.1L765.6 301.3L786.9 267.8L781.7 260.8Z" fill="#614d0e"/>
<path d="M466.4 301.3L470.9 295.1L450.3 260.8L445.1 267.8Z" fill="#56440c"/>
<path d="M573.7 263.3L572.7 259.3L566.6 220.3L567.7 224.8Z" fill="#65500e"/>
<path d="M701.3 274.2L703.2 270.3L715.4 232.7L713.3 237.1Z" fill="#5b480d"/>
<path d="M760.5 300.2L761.5 296.2L782.1 262.1L781.0 266.6Z" fill="#604c0e"/>
<path d="M506.6 282.9L502.8 281.1L486.8 244.9L491.2 246.9Z" fill="#51400c"/>
<path d="M636.7 263.0L638.1 259.0L641.2 219.9L639.6 224.5Z" fill="#5f4b0d"/>
<path d="M765.6 301.3L769.9 307.7L791.7 275.0L786.9 267.8Z" fill="#624d0e"/>
<path d="M462.1 307.7L466.4 301.3L445.1 267.8L440.3 275.0Z" fill="#58450c"/>
<path d="M576.4 267.2L575.8 262.9L570.2 224.3L570.8 229.2Z" fill="#65500e"/>
<path d="M510.2 285.1L506.6 282.9L491.2 246.9L495.2 249.4Z" fill="#56430c"/>
<path d="M759.1 304.1L760.5 300.2L781.0 266.6L779.5 271.0Z" fill="#5d4a0d"/>
<path d="M699.0 277.9L701.3 274.2L713.3 237.1L710.7 241.3Z" fill="#58450c"/>
<path d="M769.9 307.7L773.8 314.2L796.3 282.5L791.7 275.0Z" fill="#634e0e"/>
<path d="M458.2 314.2L462.1 307.7L440.3 275.0L435.7 282.5Z" fill="#59460d"/>
<path d="M634.8 267.0L636.7 263.0L639.6 224.5L637.5 228.9Z" fill="#5c480d"/>
<path d="M513.5 287.6L510.2 285.1L495.2 249.4L499.0 252.3Z" fill="#59460d"/>
<path d="M576.4 271.5L576.4 267.2L570.8 229.2L570.9 234.0Z" fill="#644f0e"/>
<path d="M757.3 307.8L759.1 304.1L779.5 271.0L777.4 275.2Z" fill="#5a470d"/>
<path d="M696.3 281.3L699.0 277.9L710.7 241.3L707.6 245.1Z" fill="#54420c"/>
<path d="M773.8 314.2L777.5 321.0L800.5 290.1L796.3 282.5Z" fill="#634e0e"/>
<path d="M454.5 321.0L458.2 314.2L435.7 282.5L431.5 290.1Z" fill="#5b470d"/>
<path d="M632.6 270.7L634.8 267.0L637.5 228.9L634.9 233.1Z" fill="#58460c"/>
<path d="M516.5 290.5L513.5 287.6L499.0 252.3L502.4 255.6Z" fill="#5c490d"/>
<path d="M576.0 275.8L576.4 271.5L570.9 234.0L570.4 238.9Z" fill="#634e0e"/>
<path d="M777.5 321.0L780.8 327.9L804.4 297.9L800.5 290.1Z" fill="#644f0e"/>
<path d="M451.2 327.9L454.5 321.0L431.5 290.1L427.6 297.9Z" fill="#5c480d"/>
<path d="M756.9 312.6L759.2 308.9L779.6 276.4L776.9 280.6Z" fill="#57440c"/>
<path d="M693.2 284.4L696.3 281.3L707.6 245.1L704.1 248.7Z" fill="#503f0b"/>
<path d="M629.9 274.1L632.6 270.7L634.9 233.1L631.9 237.0Z" fill="#55430c"/>
<path d="M519.1 293.7L516.5 290.5L502.4 255.6L505.4 259.2Z" fill="#5f4b0d"/>
<path d="M780.8 327.9L783.9 334.9L808.0 305.9L804.4 297.9Z" fill="#644f0e"/>
<path d="M448.1 334.9L451.2 327.9L427.6 297.9L424.0 305.9Z" fill="#5d490d"/>
<path d="M575.1 280.0L576.0 275.8L570.4 238.9L569.4 243.7Z" fill="#614d0e"/>
<path d="M689.8 287.2L693.2 284.4L704.1 248.7L700.3 251.8Z" fill="#4b3b0b"/>
<path d="M626.9 277.3L629.9 274.1L631.9 237.0L628.4 240.6Z" fill="#503f0b"/>
<path d="M754.1 316.0L756.9 312.6L776.9 280.6L773.8 284.4Z" fill="#53410c"/>
<path d="M521.4 297.2L519.1 293.7L505.4 259.2L508.0 263.1Z" fill="#614d0e"/>
<path d="M445.3 342.1L448.1 334.9L424.0 305.9L420.8 314.1Z" fill="#5e4a0d"/>
<path d="M783.9 334.9L786.7 342.1L811.2 314.1L808.0 305.9Z" fill="#654f0e"/>
<path d="M686.1 289.6L689.8 287.2L700.3 251.8L696.0 254.6Z" fill="#46370a"/>
<path d="M573.8 284.2L575.1 280.0L569.4 243.7L567.8 248.4Z" fill="#5f4b0d"/>
<path d="M616.0 279.6L621.1 279.8L621.8 243.4L616.0 243.3Z" fill="#3e3109"/>
<path d="M610.9 279.8L616.0 279.6L616.0 243.3L610.2 243.4Z" fill="#3c2f08"/>
<path d="M751.0 319.1L754.1 316.0L773.8 284.4L770.2 287.9Z" fill="#4f3e0b"/>
<path d="M621.1 279.8L626.2 280.1L627.7 243.8L621.8 243.4Z" fill="#403209"/>
<path d="M605.8 280.1L610.9 279.8L610.2 243.4L604.3 243.8Z" fill="#3a2d08"/>
<path d="M626.2 280.1L631.3 280.6L633.5 244.4L627.7 243.8Z" fill="#423409"/>
<path d="M600.7 280.6L605.8 280.1L604.3 243.8L598.5 244.4Z" fill="#372c08"/>
<path d="M631.3 280.6L636.4 281.4L639.3 245.2L633.5 244.4Z" fill="#44360a"/>
<path d="M595.6 281.4L600.7 280.6L598.5 244.4L592.7 245.2Z" fill="#352a08"/>
<path d="M636.4 281.4L641.4 282.3L645.0 246.3L639.3 245.2Z" fill="#46370a"/>
<path d="M590.6 282.3L595.6 281.4L592.7 245.2L587.0 246.3Z" fill="#332807"/>
<path d="M641.4 282.3L646.4 283.5L650.7 247.6L645.0 246.3Z" fill="#48390a"/>
<path d="M585.6 283.5L590.6 282.3L587.0 246.3L581.3 247.6Z" fill="#352a08"/>
<path d="M682.1 291.6L686.1 289.6L696.0 254.6L691.5 256.9Z" fill="#413309"/>
<path d="M523.3 300.9L521.4 297.2L508.0 263.1L510.1 267.3Z" fill="#634e0e"/>
<path d="M786.7 342.1L789.1 349.4L814.0 322.4L811.2 314.1Z" fill="#65500e"/>
<path d="M442.9 349.4L445.3 342.1L420.8 314.1L418.0 322.4Z" fill="#5f4b0d"/>
<path d="M449.0 342.5L445.0 344.2L420.5 316.5L425.1 314.6Z" fill="#3e3109"/>
<path d="M646.4 283.5L651.3 284.9L656.3 249.2L650.7 247.6Z" fill="#4a3a0a"/>
<path d="M580.7 284.9L585.6 283.5L581.3 247.6L575.7 249.2Z" fill="#372c08"/>
<path d="M651.3 284.9L656.2 286.4L661.9 251.0L656.3 249.2Z" fill="#4c3c0b"/>
<path d="M575.8 286.4L580.7 284.9L575.7 249.2L570.1 251.0ZM453.2 341.2L449.0 342.5L425.1 314.6L429.9 313.1Z" fill="#392d08"/>
<path d="M656.2 286.4L661.0 288.2L667.3 253.0L661.9 251.0Z" fill="#4e3d0b"/>
<path d="M571.0 288.2L575.8 286.4L570.1 251.0L564.7 253.0Z" fill="#3c2f08"/>
<path d="M747.5 321.8L751.0 319.1L770.2 287.9L766.3 291.1Z" fill="#4a3a0a"/>
<path d="M677.9 293.3L682.1 291.6L691.5 256.9L686.7 258.7Z" fill="#3c2f08"/>
<path d="M661.0 288.2L665.7 290.2L672.7 255.2L667.3 253.0Z" fill="#503f0b"/>
<path d="M566.3 290.2L571.0 288.2L564.7 253.0L559.3 255.2Z" fill="#3e3109"/>
<path d="M457.5 340.4L453.2 341.2L429.9 313.1L434.8 312.1Z" fill="#332907"/>
<path d="M789.1 349.4L791.3 356.8L816.5 330.8L814.0 322.4Z" fill="#65500e"/>
<path d="M440.7 356.8L442.9 349.4L418.0 322.4L415.5 330.8Z" fill="#604c0e"/>
<path d="M526.8 304.1L525.3 300.0L512.4 266.3L514.2 271.0Z" fill="#644f0e"/>
<path d="M665.7 290.2L670.3 292.4L678.0 257.7L672.7 255.2Z" fill="#52400c"/>
<path d="M561.7 292.4L566.3 290.2L559.3 255.2L554.0 257.7Z" fill="#403209"/>
<path d="M670.3 292.4L674.9 294.8L683.2 260.4L678.0 257.7Z" fill="#53420c"/>
<path d="M557.1 294.8L561.7 292.4L554.0 257.7L548.8 260.4Z" fill="#423409"/>
<path d="M461.8 339.9L457.5 340.4L434.8 312.1L439.7 311.7Z" fill="#382c08"/>
<path d="M743.7 324.2L747.5 321.8L766.3 291.1L762.0 293.8Z" fill="#45370a"/>
<path d="M674.9 294.8L679.3 297.3L688.3 263.3L683.2 260.4Z" fill="#55430c"/>
<path d="M552.7 297.3L557.1 294.8L548.8 260.4L543.7 263.3Z" fill="#44360a"/>
<path d="M466.1 340.0L461.8 339.9L439.7 311.7L444.7 311.7Z" fill="#3d3009"/>
<path d="M791.3 356.8L793.1 364.3L818.6 339.4L816.5 330.8Z" fill="#65500e"/>
<path d="M438.9 364.3L440.7 356.8L415.5 330.8L413.4 339.4Z" fill="#614d0e"/>
<path d="M679.3 297.3L683.6 300.1L693.2 266.4L688.3 263.3Z" fill="#56440c"/>
<path d="M548.4 300.1L552.7 297.3L543.7 263.3L538.8 266.4Z" fill="#46370a"/>
<path d="M527.9 308.3L526.8 304.1L514.2 271.0L515.4 275.8Z" fill="#65500e"/>
<path d="M739.7 326.2L743.7 324.2L762.0 293.8L757.4 296.0Z" fill="#403309"/>
<path d="M683.6 300.1L687.8 303.0L698.0 269.8L693.2 266.4Z" fill="#58450c"/>
<path d="M544.2 303.0L548.4 300.1L538.8 266.4L534.0 269.8Z" fill="#48390a"/>
<path d="M470.4 340.5L466.1 340.0L444.7 311.7L449.6 312.3Z" fill="#423409"/>
<path d="M687.8 303.0L691.8 306.1L702.6 273.3L698.0 269.8Z" fill="#59460d"/>
<path d="M540.2 306.1L544.2 303.0L534.0 269.8L529.4 273.3Z" fill="#4a3a0a"/>
<path d="M793.1 364.3L794.6 371.9L820.4 348.0L818.6 339.4Z" fill="#65500e"/>
<path d="M437.4 371.9L438.9 364.3L413.4 339.4L411.6 348.0Z" fill="#624d0e"/>
<path d="M528.5 312.6L527.9 308.3L515.4 275.8L516.1 280.7Z" fill="#65500e"/>
<path d="M735.5 327.7L739.7 326.2L757.4 296.0L752.6 297.7Z" fill="#3b2e08"/>
<path d="M691.8 306.1L695.8 309.4L707.1 277.0L702.6 273.3Z" fill="#5b480d"/>
<path d="M536.2 309.4L540.2 306.1L529.4 273.3L524.9 277.0Z" fill="#4c3c0b"/>
<path d="M474.6 341.4L470.4 340.5L449.6 312.3L454.4 313.3Z" fill="#47380a"/>
<path d="M790.6 370.9L793.3 367.7L818.9 343.2L815.9 346.9Z" fill="#52410c"/>
<path d="M695.8 309.4L699.6 312.8L711.5 280.9L707.1 277.0Z" fill="#5c490d"/>
<path d="M532.4 312.8L536.2 309.4L524.9 277.0L520.5 280.9Z" fill="#4e3d0b"/>
<path d="M794.6 371.9L795.7 379.5L821.7 356.7L820.4 348.0Z" fill="#654f0e"/>
<path d="M436.3 379.5L437.4 371.9L411.6 348.0L410.3 356.7Z" fill="#634e0e"/>
<path d="M731.1 328.8L735.5 327.7L752.6 297.7L747.5 299.0Z" fill="#362a08"/>
<path d="M478.7 342.7L474.6 341.4L454.4 313.3L459.0 314.9Z" fill="#4c3c0b"/>
<path d="M699.6 312.8L703.2 316.4L715.6 285.0L711.5 280.9Z" fill="#5d490d"/>
<path d="M528.8 316.4L532.4 312.8L520.5 280.9L516.4 285.0Z" fill="#503f0b"/>
<path d="M787.6 373.9L790.6 370.9L815.9 346.9L812.4 350.3Z" fill="#4e3d0b"/>
<path d="M726.6 329.4L731.1 328.8L747.5 299.0L742.4 299.7Z" fill="#362a08"/>
<path d="M703.2 316.4L706.7 320.2L719.6 289.2L715.6 285.0Z" fill="#5e4a0d"/>
<path d="M525.3 320.2L528.8 316.4L516.4 285.0L512.4 289.2ZM482.6 344.5L478.7 342.7L459.0 314.9L463.4 316.9Z" fill="#51400b"/>
<path d="M795.7 379.5L796.5 387.2L822.7 365.5L821.7 356.7Z" fill="#654f0e"/>
<path d="M435.5 387.2L436.3 379.5L410.3 356.7L409.3 365.5Z" fill="#634e0e"/>
<path d="M722.0 329.6L726.6 329.4L742.4 299.7L737.2 299.9Z" fill="#3b2f08"/>
<path d="M706.7 320.2L710.0 324.1L723.4 293.7L719.6 289.2Z" fill="#5f4b0d"/>
<path d="M522.0 324.1L525.3 320.2L512.4 289.2L508.6 293.7Z" fill="#53420c"/>
<path d="M785.5 378.2L789.1 375.5L814.1 352.1L810.1 355.2Z" fill="#493a0a"/>
<path d="M717.5 329.2L722.0 329.6L737.2 299.9L732.0 299.5Z" fill="#403309"/>
<path d="M486.2 346.7L482.6 344.5L463.4 316.9L467.6 319.3Z" fill="#55430c"/>
<path d="M710.0 324.1L713.1 328.1L727.0 298.3L723.4 293.7Z" fill="#604c0e"/>
<path d="M518.9 328.1L522.0 324.1L508.6 293.7L505.0 298.3Z" fill="#55430c"/>
<path d="M796.5 387.2L797.0 395.0L823.3 374.3L822.7 365.5ZM435.0 395.0L435.5 387.2L409.3 365.5L408.7 374.3Z" fill="#644f0e"/>
<path d="M713.1 328.1L716.1 332.3L730.4 303.0L727.0 298.3Z" fill="#614d0e"/>
<path d="M515.9 332.3L518.9 328.1L505.0 298.3L501.6 303.0Z" fill="#56440c"/>
<path d="M781.7 380.6L785.5 378.2L810.1 355.2L805.7 357.9Z" fill="#44360a"/>
<path d="M489.6 349.3L486.2 346.7L467.6 319.3L471.5 322.2Z" fill="#58460c"/>
<path d="M716.1 332.3L718.9 336.6L733.6 307.9L730.4 303.0Z" fill="#624d0e"/>
<path d="M513.1 336.6L515.9 332.3L501.6 303.0L498.4 307.9Z" fill="#58450c"/>
<path d="M797.0 395.0L797.1 402.8L823.5 383.2L823.3 374.3ZM434.9 402.8L435.0 395.0L408.7 374.3L408.5 383.2Z" fill="#644f0e"/>
<path d="M777.6 382.5L781.7 380.6L805.7 357.9L801.0 360.1Z" fill="#3f3209"/>
<path d="M492.7 352.2L489.6 349.3L471.5 322.2L475.0 325.5Z" fill="#5c480d"/>
<path d="M718.9 336.6L721.5 341.0L736.6 312.9L733.6 307.9Z" fill="#634e0e"/>
<path d="M510.5 341.0L513.1 336.6L498.4 307.9L495.4 312.9Z" fill="#59460d"/>
<path d="M797.1 402.8L796.9 410.6L823.3 392.1L823.5 383.2Z" fill="#634e0e"/>
<path d="M435.1 410.6L434.9 402.8L408.5 383.2L408.7 392.1Z" fill="#654f0e"/>
<path d="M721.5 341.0L723.9 345.6L739.3 318.0L736.6 312.9Z" fill="#634e0e"/>
<path d="M508.1 345.6L510.5 341.0L495.4 312.9L492.7 318.0Z" fill="#5b470d"/>
<path d="M773.3 384.0L777.6 382.5L801.0 360.1L796.1 361.8Z" fill="#3a2e08"/>
<path d="M495.5 355.4L492.7 352.2L475.0 325.5L478.1 329.2Z" fill="#5f4b0d"/>
<path d="M723.9 345.6L726.1 350.2L741.9 323.3L739.3 318.0Z" fill="#644f0e"/>
<path d="M505.9 350.2L508.1 345.6L492.7 318.0L490.1 323.3Z" fill="#5c480d"/>
<path d="M768.8 385.0L773.3 384.0L796.1 361.8L791.0 363.0Z" fill="#342907"/>
<path d="M796.9 410.6L796.3 418.3L822.7 401.0L823.3 392.1Z" fill="#634e0e"/>
<path d="M435.7 418.3L435.1 410.6L408.7 392.1L409.3 401.0Z" fill="#654f0e"/>
<path d="M497.8 358.9L495.5 355.4L478.1 329.2L480.8 333.2Z" fill="#614c0e"/>
<path d="M726.1 350.2L728.0 354.9L744.2 328.7L741.9 323.3Z" fill="#644f0e"/>
<path d="M504.0 354.9L505.9 350.2L490.1 323.3L487.8 328.7Z" fill="#5d490d"/>
<path d="M764.3 385.6L768.8 385.0L791.0 363.0L785.7 363.6Z" fill="#372b08"/>
<path d="M502.2 359.7L504.0 354.9L487.8 328.7L485.8 334.1Z" fill="#5e4a0d"/>
<path d="M728.0 354.9L729.8 359.7L746.2 334.1L744.2 328.7Z" fill="#654f0e"/>
<path d="M796.3 418.3L795.4 426.1L821.7 409.8L822.7 401.0Z" fill="#624d0e"/>
<path d="M436.6 426.1L435.7 418.3L409.3 401.0L410.3 409.8Z" fill="#65500e"/>
<path d="M439.6 419.3L436.6 422.6L410.3 405.9L413.8 402.1Z" fill="#52410c"/>
<path d="M442.9 416.3L439.6 419.3L413.8 402.1L417.6 398.7Z" fill="#4e3d0b"/>
<path d="M759.6 385.6L764.3 385.6L785.7 363.6L780.5 363.6Z" fill="#3c2f08"/>
<path d="M729.8 359.7L731.4 364.6L748.1 339.7L746.2 334.1Z" fill="#65500e"/>
<path d="M500.6 364.6L502.2 359.7L485.8 334.1L483.9 339.7Z" fill="#5f4b0d"/>
<path d="M446.5 413.7L442.9 416.3L417.6 398.7L421.7 395.6Z" fill="#493a0a"/>
<path d="M450.3 411.4L446.5 413.7L421.7 395.6L426.1 393.1Z" fill="#44360a"/>
<path d="M755.0 385.2L759.6 385.6L780.5 363.6L775.2 363.2Z" fill="#413409"/>
<path d="M795.4 426.1L794.2 433.8L820.3 418.7L821.7 409.8Z" fill="#614d0e"/>
<path d="M437.8 433.8L436.6 426.1L410.3 409.8L411.7 418.7ZM731.4 364.6L732.8 369.5L749.6 345.3L748.1 339.7Z" fill="#65500e"/>
<path d="M499.2 369.5L500.6 364.6L483.9 339.7L482.4 345.3Z" fill="#604c0e"/>
<path d="M454.3 409.6L450.3 411.4L426.1 393.1L430.8 391.0Z" fill="#3f3209"/>
<path d="M750.5 384.3L755.0 385.2L775.2 363.2L770.0 362.1Z" fill="#46370a"/>
<path d="M458.5 408.1L454.3 409.6L430.8 391.0L435.6 389.3Z" fill="#3a2e08"/>
<path d="M732.8 369.5L733.9 374.6L751.0 351.0L749.6 345.3Z" fill="#65500e"/>
<path d="M498.1 374.6L499.2 369.5L482.4 345.3L481.0 351.0Z" fill="#614d0e"/>
<path d="M746.1 382.9L750.5 384.3L770.0 362.1L764.9 360.6Z" fill="#4b3b0b"/>
<path d="M794.2 433.8L792.5 441.5L818.5 427.4L820.3 418.7Z" fill="#604c0e"/>
<path d="M439.5 441.5L437.8 433.8L411.7 418.7L413.5 427.4Z" fill="#65500e"/>
<path d="M462.9 407.2L458.5 408.1L435.6 389.3L440.5 388.2Z" fill="#342907"/>
<path d="M741.8 381.1L746.1 382.9L764.9 360.6L760.0 358.5Z" fill="#503f0b"/>
<path d="M737.7 378.9L741.8 381.1L760.0 358.5L755.4 356.0Z" fill="#54420c"/>
<path d="M733.9 374.6L734.8 379.6L752.0 356.8L751.0 351.0Z" fill="#65500e"/>
<path d="M497.2 379.6L498.1 374.6L481.0 351.0L480.0 356.8Z" fill="#624d0e"/>
<path d="M467.2 406.6L462.9 407.2L440.5 388.2L445.6 387.6Z" fill="#372b08"/>
<path d="M441.4 449.1L439.5 441.5L413.5 427.4L415.7 436.1Z" fill="#65500e"/>
<path d="M792.5 441.5L790.6 449.1L816.3 436.1L818.5 427.4Z" fill="#5f4b0d"/>
<path d="M471.6 406.6L467.2 406.6L445.6 387.6L450.6 387.6Z" fill="#3c2f08"/>
<path d="M734.8 379.6L735.5 384.7L752.9 362.6L752.0 356.8Z" fill="#654f0e"/>
<path d="M496.5 384.7L497.2 379.6L480.0 356.8L479.1 362.6Z" fill="#634e0e"/>
<path d="M787.6 450.7L791.8 448.9L817.7 435.9L812.9 438.0Z" fill="#3e3109"/>
<path d="M476.0 407.0L471.6 406.6L450.6 387.6L455.6 388.0Z" fill="#413409"/>
<path d="M735.5 384.7L736.0 389.8L753.4 368.5L752.9 362.6Z" fill="#654f0e"/>
<path d="M496.0 389.8L496.5 384.7L479.1 362.6L478.6 368.5Z" fill="#634e0e"/>
<path d="M790.6 449.1L788.3 456.6L813.7 444.8L816.3 436.1Z" fill="#5e4a0d"/>
<path d="M443.7 456.6L441.4 449.1L415.7 436.1L418.3 444.8Z" fill="#654f0e"/>
<path d="M480.3 407.9L476.0 407.0L455.6 388.0L460.5 389.0Z" fill="#46370a"/>
<path d="M783.2 452.2L787.6 450.7L812.9 438.0L807.8 439.6Z" fill="#392d08"/>
<path d="M736.0 389.8L736.3 395.0L753.7 374.3L753.4 368.5ZM495.7 395.0L496.0 389.8L478.6 368.5L478.3 374.3ZM446.3 464.1L443.7 456.6L418.3 444.8L421.3 453.3Z" fill="#644f0e"/>
<path d="M788.3 456.6L785.7 464.1L810.7 453.3L813.7 444.8Z" fill="#5d490d"/>
<path d="M484.4 409.2L480.3 407.9L460.5 389.0L465.3 390.5Z" fill="#4b3b0b"/>
<path d="M736.3 395.0L736.3 400.2L753.8 380.2L753.7 374.3ZM495.7 400.2L495.7 395.0L478.3 374.3L478.2 380.2Z" fill="#644f0e"/>
<path d="M778.7 453.1L783.2 452.2L807.8 439.6L802.6 440.7Z" fill="#332907"/>
<path d="M488.4 410.9L484.4 409.2L465.3 390.5L469.8 392.5Z" fill="#503f0b"/>
<path d="M785.7 464.1L782.7 471.4L807.3 461.7L810.7 453.3Z" fill="#5c480d"/>
<path d="M449.3 471.4L446.3 464.1L421.3 453.3L424.7 461.7Z" fill="#644f0e"/>
<path d="M736.3 400.2L736.1 405.3L753.5 386.1L753.8 380.2Z" fill="#634e0e"/>
<path d="M495.9 405.3L495.7 400.2L478.2 380.2L478.5 386.1Z" fill="#654f0e"/>
<path d="M774.0 453.6L778.7 453.1L802.6 440.7L797.3 441.3Z" fill="#382c08"/>
<path d="M492.2 413.1L488.4 410.9L469.8 392.5L474.1 394.9Z" fill="#54420c"/>
<path d="M736.1 405.3L735.6 410.5L753.1 392.0L753.5 386.1Z" fill="#634e0e"/>
<path d="M496.4 410.5L495.9 405.3L478.5 386.1L478.9 392.0Z" fill="#654f0e"/>
<path d="M769.4 453.5L774.0 453.6L797.3 441.3L791.9 441.2Z" fill="#3d3009"/>
<path d="M782.7 471.4L779.4 478.6L803.6 469.9L807.3 461.7Z" fill="#5b470d"/>
<path d="M452.6 478.6L449.3 471.4L424.7 461.7L428.4 469.9Z" fill="#634e0e"/>
<path d="M735.6 410.5L734.9 415.6L752.3 397.9L753.1 392.0Z" fill="#624d0e"/>
<path d="M497.1 415.6L496.4 410.5L478.9 392.0L479.7 397.9Z" fill="#65500e"/>
<path d="M764.7 453.0L769.4 453.5L791.9 441.2L786.6 440.6Z" fill="#423409"/>
<path d="M779.4 478.6L775.7 485.7L799.5 478.0L803.6 469.9Z" fill="#59460d"/>
<path d="M456.3 485.7L452.6 478.6L428.4 469.9L432.5 478.0Z" fill="#634e0e"/>
<path d="M760.1 452.0L764.7 453.0L786.6 440.6L781.3 439.4Z" fill="#47380a"/>
<path d="M734.9 415.6L734.0 420.7L751.3 403.7L752.3 397.9Z" fill="#614d0e"/>
<path d="M498.0 420.7L497.1 415.6L479.7 397.9L480.7 403.7Z" fill="#65500e"/>
<path d="M755.6 450.5L760.1 452.0L781.3 439.4L776.2 437.7Z" fill="#4c3c0b"/>
<path d="M734.0 420.7L732.9 425.8L750.0 409.5L751.3 403.7Z" fill="#604c0e"/>
<path d="M499.1 425.8L498.0 420.7L480.7 403.7L482.0 409.5Z" fill="#65500e"/>
<path d="M775.7 485.7L771.8 492.6L795.0 485.9L799.5 478.0Z" fill="#58450c"/>
<path d="M460.2 492.6L456.3 485.7L432.5 478.0L437.0 485.9Z" fill="#624d0e"/>
<path d="M751.3 448.5L755.6 450.5L776.2 437.7L771.2 435.5Z" fill="#51400b"/>
<path d="M747.3 446.1L751.3 448.5L771.2 435.5L766.6 432.7Z" fill="#55430c"/>
<path d="M500.4 430.8L499.1 425.8L482.0 409.5L483.5 415.2Z" fill="#65500e"/>
<path d="M732.9 425.8L731.6 430.8L748.5 415.2L750.0 409.5Z" fill="#5f4b0d"/>
<path d="M743.5 443.3L747.3 446.1L766.6 432.7L762.2 429.5Z" fill="#58460c"/>
<path d="M464.5 499.3L460.2 492.6L437.0 485.9L441.9 493.7Z" fill="#614d0e"/>
<path d="M771.8 492.6L767.5 499.3L790.1 493.7L795.0 485.9Z" fill="#56440c"/>
<path d="M740.0 440.2L743.5 443.3L762.2 429.5L758.2 425.9Z" fill="#5c480d"/>
<path d="M734.1 432.8L736.9 436.6L754.6 421.9L751.4 417.5Z" fill="#614c0e"/>
<path d="M736.9 436.6L740.0 440.2L758.2 425.9L754.6 421.9Z" fill="#5f4b0d"/>
<path d="M465.5 493.7L464.2 498.0L441.6 492.2L443.1 487.2Z" fill="#604c0e"/>
<path d="M467.2 489.5L465.5 493.7L443.1 487.2L445.1 482.4Z" fill="#5d4a0d"/>
<path d="M731.6 430.8L730.0 435.8L746.7 420.9L748.5 415.2Z" fill="#5e4a0d"/>
<path d="M502.0 435.8L500.4 430.8L483.5 415.2L485.3 420.9Z" fill="#654f0e"/>
<path d="M469.3 485.5L467.2 489.5L445.1 482.4L447.5 477.8Z" fill="#5a470d"/>
<path d="M471.8 481.7L469.3 485.5L447.5 477.8L450.5 473.5Z" fill="#57440c"/>
<path d="M474.8 478.3L471.8 481.7L450.5 473.5L453.8 469.5Z" fill="#53410c"/>
<path d="M767.5 499.3L763.0 505.9L784.9 501.2L790.1 493.7Z" fill="#55430c"/>
<path d="M469.0 505.9L464.5 499.3L441.9 493.7L447.1 501.2Z" fill="#604c0e"/>
<path d="M478.0 475.1L474.8 478.3L453.8 469.5L457.6 465.9Z" fill="#4f3e0b"/>
<path d="M730.0 435.8L728.2 440.7L744.6 426.5L746.7 420.9Z" fill="#5d490d"/>
<path d="M503.8 440.7L502.0 435.8L485.3 420.9L487.4 426.5Z" fill="#644f0e"/>
<path d="M481.6 472.3L478.0 475.1L457.6 465.9L461.7 462.7Z" fill="#4a3a0a"/>
<path d="M485.4 469.9L481.6 472.3L461.7 462.7L466.1 460.0Z" fill="#45370a"/>
<path d="M763.0 505.9L758.1 512.2L779.3 508.5L784.9 501.2Z" fill="#53420c"/>
<path d="M473.9 512.2L469.0 505.9L447.1 501.2L452.7 508.5Z" fill="#5f4b0d"/>
<path d="M728.2 440.7L726.1 445.5L742.3 432.0L744.6 426.5Z" fill="#5c480d"/>
<path d="M505.9 445.5L503.8 440.7L487.4 426.5L489.7 432.0Z" fill="#644f0e"/>
<path d="M489.4 468.0L485.4 469.9L466.1 460.0L470.7 457.7Z" fill="#403309"/>
<path d="M493.6 466.4L489.4 468.0L470.7 457.7L475.6 455.9Z" fill="#3b2e08"/>
<path d="M726.1 445.5L723.9 450.2L739.8 437.4L742.3 432.0Z" fill="#5b470d"/>
<path d="M508.1 450.2L505.9 445.5L489.7 432.0L492.2 437.4Z" fill="#634e0e"/>
<path d="M758.1 512.2L752.9 518.3L773.4 515.5L779.3 508.5Z" fill="#51400b"/>
<path d="M479.1 518.3L473.9 512.2L452.7 508.5L458.6 515.5Z" fill="#5e4a0d"/>
<path d="M498.0 465.3L493.6 466.4L475.6 455.9L480.5 454.7ZM502.4 464.7L498.0 465.3L480.5 454.7L485.6 454.0Z" fill="#362a08"/>
<path d="M723.9 450.2L721.5 454.9L737.0 442.7L739.8 437.4Z" fill="#59460d"/>
<path d="M510.5 454.9L508.1 450.2L492.2 437.4L495.0 442.7Z" fill="#634e0e"/>
<path d="M747.9 520.2L752.6 520.4L773.1 517.8L767.6 517.7Z" fill="#3e3109"/>
<path d="M752.9 518.3L747.5 524.3L767.2 522.3L773.4 515.5Z" fill="#503f0b"/>
<path d="M484.5 524.3L479.1 518.3L458.6 515.5L464.8 522.3Z" fill="#5d490d"/>
<path d="M506.9 464.5L502.4 464.7L485.6 454.0L490.7 453.8Z" fill="#3b2f08"/>
<path d="M721.5 454.9L718.8 459.4L734.0 447.9L737.0 442.7Z" fill="#58450c"/>
<path d="M513.2 459.4L510.5 454.9L495.0 442.7L498.0 447.9Z" fill="#624d0e"/>
<path d="M743.2 519.6L747.9 520.2L767.6 517.7L762.2 516.9Z" fill="#43350a"/>
<path d="M511.3 464.8L506.9 464.5L490.7 453.8L495.8 454.2Z" fill="#403309"/>
<path d="M747.5 524.3L741.8 529.9L760.6 528.8L767.2 522.3Z" fill="#4e3d0b"/>
<path d="M490.2 529.9L484.5 524.3L464.8 522.3L471.4 528.8Z" fill="#5c490d"/>
<path d="M718.8 459.4L715.9 463.8L730.7 452.9L734.0 447.9Z" fill="#56440c"/>
<path d="M516.1 463.8L513.2 459.4L498.0 447.9L501.3 452.9Z" fill="#614d0e"/>
<path d="M738.6 518.4L743.2 519.6L762.2 516.9L756.9 515.6Z" fill="#48390a"/>
<path d="M741.8 529.9L735.8 535.3L753.8 535.1L760.6 528.8Z" fill="#4c3c0b"/>
<path d="M496.2 535.3L490.2 529.9L471.4 528.8L478.2 535.1Z" fill="#5b480d"/>
<path d="M519.1 468.1L516.1 463.8L501.3 452.9L504.8 457.9Z" fill="#604c0e"/>
<path d="M715.9 463.8L712.9 468.1L727.2 457.9L730.7 452.9Z" fill="#55430c"/>
<path d="M734.1 516.8L738.6 518.4L756.9 515.6L751.7 513.7Z" fill="#4d3d0b"/>
<path d="M729.8 514.7L734.1 516.8L751.7 513.7L746.8 511.3Z" fill="#51400c"/>
<path d="M712.9 468.1L709.6 472.2L723.5 462.6L727.2 457.9Z" fill="#53420c"/>
<path d="M522.4 472.2L519.1 468.1L504.8 457.9L508.5 462.6Z" fill="#5f4b0d"/>
<path d="M735.8 535.3L729.6 540.5L746.6 541.0L753.8 535.1Z" fill="#4a3a0a"/>
<path d="M502.4 540.5L496.2 535.3L478.2 535.1L485.4 541.0Z" fill="#59460d"/>
<path d="M725.7 512.1L729.8 514.7L746.8 511.3L742.1 508.4Z" fill="#56430c"/>
<path d="M709.6 472.2L706.2 476.2L719.5 467.2L723.5 462.6Z" fill="#51400b"/>
<path d="M525.8 476.2L522.4 472.2L508.5 462.6L512.5 467.2Z" fill="#5e4a0d"/>
<path d="M721.9 509.2L725.7 512.1L742.1 508.4L737.7 505.0Z" fill="#59460d"/>
<path d="M729.6 540.5L723.1 545.4L739.2 546.6L746.6 541.0Z" fill="#48390a"/>
<path d="M508.9 545.4L502.4 540.5L485.4 541.0L492.8 546.6Z" fill="#58450c"/>
<path d="M718.5 505.8L721.9 509.2L737.7 505.0L733.8 501.1Z" fill="#5c490d"/>
<path d="M706.2 476.2L702.6 480.1L715.4 471.6L719.5 467.2Z" fill="#503f0b"/>
<path d="M529.4 480.1L525.8 476.2L512.5 467.2L516.6 471.6Z" fill="#5d490d"/>
<path d="M706.6 480.3L707.4 485.0L721.0 477.2L720.1 471.9Z" fill="#65500e"/>
<path d="M715.4 502.1L718.5 505.8L733.8 501.1L730.2 496.9Z" fill="#5f4b0d"/>
<path d="M707.4 485.0L708.7 489.5L722.5 482.4L721.0 477.2Z" fill="#65500e"/>
<path d="M712.7 498.2L715.4 502.1L730.2 496.9L727.1 492.4Z" fill="#614d0e"/>
<path d="M708.7 489.5L710.5 494.0L724.6 487.5L722.5 482.4Z" fill="#644f0e"/>
<path d="M710.5 494.0L712.7 498.2L727.1 492.4L724.6 487.5Z" fill="#634e0e"/>
<path d="M723.1 545.4L716.4 550.0L731.6 551.9L739.2 546.6Z" fill="#46370a"/>
<path d="M515.6 550.0L508.9 545.4L492.8 546.6L500.4 551.9Z" fill="#56440c"/>
<path d="M702.6 480.1L698.8 483.8L711.0 475.9L715.4 471.6Z" fill="#4e3d0b"/>
<path d="M533.2 483.8L529.4 480.1L516.6 471.6L521.0 475.9Z" fill="#5c490d"/>
<path d="M716.4 550.0L709.5 554.3L723.7 556.8L731.6 551.9Z" fill="#44360a"/>
<path d="M522.5 554.3L515.6 550.0L500.4 551.9L508.3 556.8Z" fill="#55430c"/>
<path d="M698.8 483.8L694.8 487.3L706.5 479.9L711.0 475.9Z" fill="#4c3c0b"/>
<path d="M537.2 487.3L533.2 483.8L521.0 475.9L525.5 479.9Z" fill="#5b480d"/>
<path d="M522.5 545.3L522.9 549.9L508.8 551.8L508.5 546.6Z" fill="#654f0e"/>
<path d="M522.9 549.9L523.6 554.4L509.7 557.0L508.8 551.8Z" fill="#65500e"/>
<path d="M522.7 540.8L522.5 545.3L508.5 546.6L508.7 541.3Z" fill="#644f0e"/>
<path d="M523.4 536.2L522.7 540.8L508.7 541.3L509.5 536.1Z" fill="#624e0e"/>
<path d="M524.5 531.8L523.4 536.2L509.5 536.1L510.8 531.0Z" fill="#604c0e"/>
<path d="M709.5 554.3L702.5 558.3L715.5 561.4L723.7 556.8Z" fill="#423409"/>
<path d="M529.5 558.3L522.5 554.3L508.3 556.8L516.5 561.4Z" fill="#53420c"/>
<path d="M694.8 487.3L690.7 490.7L701.8 483.8L706.5 479.9Z" fill="#4a3a0a"/>
<path d="M541.3 490.7L537.2 487.3L525.5 479.9L530.2 483.8Z" fill="#59460d"/>
<path d="M526.1 527.5L524.5 531.8L510.8 531.0L512.6 526.0Z" fill="#5e4a0d"/>
<path d="M528.1 523.4L526.1 527.5L512.6 526.0L514.9 521.3Z" fill="#5b480d"/>
<path d="M530.5 519.5L528.1 523.4L514.9 521.3L517.7 516.8Z" fill="#58450c"/>
<path d="M533.3 515.9L530.5 519.5L517.7 516.8L521.0 512.7Z" fill="#54420c"/>
<path d="M690.7 490.7L686.4 493.9L696.9 487.4L701.8 483.8Z" fill="#48390a"/>
<path d="M545.6 493.9L541.3 490.7L530.2 483.8L535.1 487.4Z" fill="#58450c"/>
<path d="M702.5 558.3L695.2 561.9L707.2 565.7L715.5 561.4Z" fill="#403209"/>
<path d="M536.8 561.9L529.5 558.3L516.5 561.4L524.8 565.7Z" fill="#52400c"/>
<path d="M536.5 512.7L533.3 515.9L521.0 512.7L524.6 509.0Z" fill="#503f0b"/>
<path d="M540.0 509.7L536.5 512.7L524.6 509.0L528.7 505.6Z" fill="#4b3b0b"/>
<path d="M686.4 493.9L682.0 496.9L691.8 490.8L696.9 487.4Z" fill="#46370a"/>
<path d="M550.0 496.9L545.6 493.9L535.1 487.4L540.2 490.8Z" fill="#56440c"/>
<path d="M543.8 507.2L540.0 509.7L528.7 505.6L533.0 502.7Z" fill="#46370a"/>
<path d="M695.2 561.9L687.8 565.3L698.6 569.5L707.2 565.7Z" fill="#3e3109"/>
<path d="M544.2 565.3L536.8 561.9L524.8 565.7L533.4 569.5Z" fill="#503f0b"/>
<path d="M547.8 505.1L543.8 507.2L533.0 502.7L537.6 500.3Z" fill="#413309"/>
<path d="M682.0 496.9L677.5 499.6L686.6 494.0L691.8 490.8Z" fill="#44360a"/>
<path d="M554.5 499.6L550.0 496.9L540.2 490.8L545.4 494.0Z" fill="#55430c"/>
<path d="M552.0 503.5L547.8 505.1L537.6 500.3L542.4 498.4ZM687.8 565.3L680.2 568.3L689.9 573.0L698.6 569.5Z" fill="#3c2f08"/>
<path d="M551.8 568.3L544.2 565.3L533.4 569.5L542.1 573.0Z" fill="#4e3d0b"/>
<path d="M680.2 565.7L684.4 567.9L694.8 572.6L689.9 570.0Z" fill="#52410c"/>
<path d="M680.2 568.3L672.4 571.0L681.0 576.1L689.9 573.0Z" fill="#392d08"/>
<path d="M559.6 571.0L551.8 568.3L542.1 573.0L551.0 576.1Z" fill="#4c3c0b"/>
<path d="M676.1 563.0L680.2 565.7L689.9 570.0L685.2 566.9Z" fill="#56440c"/>
<path d="M674.7 505.9L669.8 508.4L677.8 504.1L683.5 501.3Z" fill="#403209"/>
<path d="M562.2 508.4L557.3 505.9L548.5 501.3L554.2 504.1Z" fill="#52400c"/>
<path d="M672.4 559.9L676.1 563.0L685.2 566.9L681.0 563.3Z" fill="#5a470d"/>
<path d="M672.4 571.0L664.6 573.3L672.0 578.8L681.0 576.1Z" fill="#372c08"/>
<path d="M567.4 573.3L559.6 571.0L551.0 576.1L560.0 578.8Z" fill="#4a3a0a"/>
<path d="M669.8 508.4L664.7 510.7L672.0 506.7L677.8 504.1Z" fill="#3e3109"/>
<path d="M567.3 510.7L562.2 508.4L554.2 504.1L560.0 506.7Z" fill="#503f0b"/>
<path d="M669.1 556.4L672.4 559.9L681.0 563.3L677.1 559.3Z" fill="#5d490d"/>
<path d="M664.6 573.3L656.7 575.3L662.8 581.1L672.0 578.8Z" fill="#352a08"/>
<path d="M575.3 575.3L567.4 573.3L560.0 578.8L569.2 581.1Z" fill="#48390a"/>
<path d="M666.1 552.6L669.1 556.4L677.1 559.3L673.6 554.9Z" fill="#604b0e"/>
<path d="M664.7 510.7L659.6 512.7L666.1 509.0L672.0 506.7Z" fill="#3c2f08"/>
<path d="M572.4 512.7L567.3 510.7L560.0 506.7L565.9 509.0Z" fill="#4e3d0b"/>
<path d="M656.7 575.3L648.6 577.0L653.6 583.0L662.8 581.1Z" fill="#332807"/>
<path d="M583.4 577.0L575.3 575.3L569.2 581.1L578.4 583.0Z" fill="#46370a"/>
<path d="M663.5 548.5L666.1 552.6L673.6 554.9L670.7 550.1Z" fill="#624d0e"/>
<path d="M660.3 511.3L658.9 515.8L665.4 512.6L666.9 507.4Z" fill="#5f4b0d"/>
<path d="M591.5 578.2L583.4 577.0L578.4 583.0L587.7 584.5Z" fill="#44360a"/>
<path d="M648.6 577.0L640.5 578.2L644.3 584.5L653.6 583.0Z" fill="#352a08"/>
<path d="M659.6 512.7L654.3 514.5L660.0 511.1L666.1 509.0Z" fill="#392d08"/>
<path d="M577.7 514.5L572.4 512.7L565.9 509.0L572.0 511.1Z" fill="#4c3c0b"/>
<path d="M661.4 544.1L663.5 548.5L670.7 550.1L668.2 545.1Z" fill="#634e0e"/>
<path d="M658.9 515.8L658.1 520.5L664.4 518.0L665.4 512.6Z" fill="#614d0e"/>
<path d="M640.5 578.2L632.4 579.1L634.9 585.5L644.3 584.5Z" fill="#372c08"/>
<path d="M599.6 579.1L591.5 578.2L587.7 584.5L597.1 585.5Z" fill="#423409"/>
<path d="M659.7 539.6L661.4 544.1L668.2 545.1L666.3 539.9Z" fill="#654f0e"/>
<path d="M658.1 520.5L657.7 525.3L664.0 523.5L664.4 518.0Z" fill="#634e0e"/>
<path d="M658.6 534.9L659.7 539.6L666.3 539.9L665.0 534.5Z" fill="#65500e"/>
<path d="M632.4 579.1L624.2 579.7L625.4 586.1L634.9 585.5Z" fill="#3a2d08"/>
<path d="M607.8 579.7L599.6 579.1L597.1 585.5L606.6 586.1Z" fill="#403209"/>
<path d="M657.7 525.3L657.9 530.1L664.2 529.0L664.0 523.5Z" fill="#644f0e"/>
<path d="M657.9 530.1L658.6 534.9L665.0 534.5L664.2 529.0Z" fill="#65500e"/>
<path d="M654.3 514.5L649.0 516.1L653.9 512.9L660.0 511.1Z" fill="#372c08"/>
<path d="M583.0 516.1L577.7 514.5L572.0 511.1L578.1 512.9Z" fill="#4a3a0a"/>
<path d="M624.2 579.7L616.0 579.9L616.0 586.4L625.4 586.1Z" fill="#3c2f08"/>
<path d="M616.0 579.9L607.8 579.7L606.6 586.1L616.0 586.4Z" fill="#3e3109"/>
<path d="M600.4 575.2L603.1 579.0L601.1 585.3L598.0 581.0Z" fill="#604c0e"/>
<path d="M598.1 571.2L600.4 575.2L598.0 581.0L595.3 576.4Z" fill="#624d0e"/>
<path d="M649.0 516.1L643.6 517.4L647.7 514.4L653.9 512.9Z" fill="#352a08"/>
<path d="M588.4 517.4L583.0 516.1L578.1 512.9L584.3 514.4Z" fill="#48390a"/>
<path d="M596.2 567.0L598.1 571.2L595.3 576.4L593.2 571.5Z" fill="#644f0e"/>
<path d="M594.8 562.6L596.2 567.0L593.2 571.5L591.5 566.5Z" fill="#654f0e"/>
<path d="M643.6 517.4L638.1 518.5L641.5 515.7L647.7 514.4Z" fill="#332807"/>
<path d="M593.9 518.5L588.4 517.4L584.3 514.4L590.5 515.7Z" fill="#46370a"/>
<path d="M593.8 558.1L594.8 562.6L591.5 566.5L590.4 561.3Z" fill="#65500e"/>
<path d="M593.3 553.6L593.8 558.1L590.4 561.3L589.9 556.0Z" fill="#654f0e"/>
<path d="M638.1 518.5L632.7 519.3L635.1 516.7L641.5 515.7Z" fill="#352a08"/>
<path d="M599.3 519.3L593.9 518.5L590.5 515.7L596.9 516.7Z" fill="#44360a"/>
<path d="M593.3 549.0L593.3 553.6L589.9 556.0L589.9 550.7Z" fill="#644f0e"/>
<path d="M593.8 544.4L593.3 549.0L589.9 550.7L590.5 545.5Z" fill="#634e0e"/>
<path d="M632.7 519.3L627.1 519.9L628.8 517.4L635.1 516.7Z" fill="#372c08"/>
<path d="M604.9 519.9L599.3 519.3L596.9 516.7L603.2 517.4Z" fill="#423409"/>
<path d="M594.8 539.9L593.8 544.4L590.5 545.5L591.6 540.3Z" fill="#614c0e"/>
<path d="M596.2 535.6L594.8 539.9L591.6 540.3L593.2 535.3Z" fill="#5f4b0d"/>
<path d="M598.1 531.4L596.2 535.6L593.2 535.3L595.4 530.5Z" fill="#5c480d"/>
<path d="M627.1 519.9L621.6 520.3L622.4 517.8L628.8 517.4Z" fill="#3a2d08"/>
<path d="M610.4 520.3L604.9 519.9L603.2 517.4L609.6 517.8Z" fill="#403209"/>
<path d="M606.1 520.5L603.1 523.8L601.1 521.8L604.7 518.0Z" fill="#503f0b"/>
<path d="M600.4 527.5L598.1 531.4L595.4 530.5L598.0 526.0Z" fill="#58460c"/>
<path d="M603.1 523.8L600.4 527.5L598.0 526.0L601.1 521.8Z" fill="#55430c"/>
<path d="M621.6 520.3L616.0 520.4L616.0 517.9L622.4 517.8Z" fill="#3c2f08"/>
<path d="M616.0 520.4L610.4 520.3L609.6 517.8L616.0 517.9Z" fill="#3e3109"/>
</g>
<path d="M616.0 175.9L624.8 176.1L633.7 176.6L642.5 177.5L651.2 178.8L659.9 180.4L668.5 182.4L677.1 184.7L685.5 187.4L693.8 190.4L702.0 193.8L710.0 197.5L717.9 201.5L725.6 205.9L733.2 210.6L740.5 215.5L747.6 220.8L754.5 226.4L761.1 232.3L767.5 238.4L773.6 244.8L779.5 251.5L785.1 258.4L790.4 265.6L795.3 273.0L800.0 280.6L804.3 288.4L808.3 296.4L811.9 304.5L815.2 312.9L818.1 321.3L820.6 329.9L822.8 338.6L824.6 347.5L826.0 356.4L827.0 365.3L827.6 374.3L827.8 383.4L827.6 392.5L827.0 401.5L826.0 410.6L824.6 419.6L822.7 428.6L820.5 437.5L817.9 446.3L814.8 455.0L811.4 463.5L807.6 472.0L803.4 480.2L798.8 488.3L793.8 496.2L788.5 503.9L782.8 511.3L776.8 518.5L770.4 525.5L763.7 532.2L756.7 538.5L749.5 544.6L741.9 550.3L734.1 555.7L726.0 560.8L717.7 565.5L709.1 569.8L700.4 573.8L691.5 577.3L682.4 580.5L673.2 583.3L663.8 585.6L654.4 587.5L644.9 589.0L635.3 590.1L625.7 590.8L616.0 591.0L606.3 590.8L596.7 590.1L587.1 589.0L577.6 587.5L568.2 585.6L558.8 583.3L549.6 580.5L540.5 577.3L531.6 573.8L522.9 569.8L514.3 565.5L506.0 560.8L497.9 555.7L490.1 550.3L482.5 544.6L475.3 538.5L468.3 532.2L461.6 525.5L455.2 518.5L449.2 511.3L443.5 503.9L438.2 496.2L433.2 488.3L428.6 480.2L424.4 472.0L420.6 463.5L417.2 455.0L414.1 446.3L411.5 437.5L409.3 428.6L407.4 419.6L406.0 410.6L405.0 401.5L404.4 392.5L404.2 383.4L404.4 374.3L405.0 365.3L406.0 356.4L407.4 347.5L409.2 338.6L411.4 329.9L413.9 321.3L416.8 312.9L420.1 304.5L423.7 296.4L427.7 288.4L432.0 280.6L436.7 273.0L441.6 265.6L446.9 258.4L452.5 251.5L458.4 244.8L464.5 238.4L470.9 232.3L477.5 226.4L484.4 220.8L491.5 215.5L498.8 210.6L506.4 205.9L514.1 201.5L522.0 197.5L530.0 193.8L538.2 190.4L546.5 187.4L554.9 184.7L563.5 182.4L572.1 180.4L580.8 178.8L589.5 177.5L598.3 176.6L607.2 176.1ZM607.3 180.0L598.7 180.5L590.1 181.4L581.5 182.6L572.9 184.2L564.5 186.2L556.1 188.4L547.9 191.1L539.7 194.0L531.7 197.3L523.8 201.0L516.1 204.9L508.5 209.2L501.2 213.8L494.0 218.7L487.0 223.9L480.3 229.3L473.8 235.1L467.5 241.1L461.5 247.4L455.7 254.0L450.3 260.8L445.1 267.8L440.3 275.0L435.7 282.5L431.5 290.1L427.6 297.9L424.0 305.9L420.8 314.1L418.0 322.4L415.5 330.8L413.4 339.4L411.6 348.0L410.3 356.7L409.3 365.5L408.7 374.3L408.5 383.2L408.7 392.1L409.3 401.0L410.3 409.8L411.7 418.7L413.5 427.4L415.7 436.1L418.3 444.8L421.3 453.3L424.7 461.7L428.4 469.9L432.5 478.0L437.0 485.9L441.9 493.7L447.1 501.2L452.7 508.5L458.6 515.5L464.8 522.3L471.4 528.8L478.2 535.1L485.4 541.0L492.8 546.6L500.4 551.9L508.3 556.8L516.5 561.4L524.8 565.7L533.4 569.5L542.1 573.0L551.0 576.1L560.0 578.8L569.2 581.1L578.4 583.0L587.7 584.5L597.1 585.5L606.6 586.1L616.0 586.4L625.4 586.1L634.9 585.5L644.3 584.5L653.6 583.0L662.8 581.1L672.0 578.8L681.0 576.1L689.9 573.0L698.6 569.5L707.2 565.7L715.5 561.4L723.7 556.8L731.6 551.9L739.2 546.6L746.6 541.0L753.8 535.1L760.6 528.8L767.2 522.3L773.4 515.5L779.3 508.5L784.9 501.2L790.1 493.7L795.0 485.9L799.5 478.0L803.6 469.9L807.3 461.7L810.7 453.3L813.7 444.8L816.3 436.1L818.5 427.4L820.3 418.7L821.7 409.8L822.7 401.0L823.3 392.1L823.5 383.2L823.3 374.3L822.7 365.5L821.7 356.7L820.4 348.0L818.6 339.4L816.5 330.8L814.0 322.4L811.2 314.1L808.0 305.9L804.4 297.9L800.5 290.1L796.3 282.5L791.7 275.0L786.9 267.8L781.7 260.8L776.3 254.0L770.5 247.4L764.5 241.1L758.2 235.1L751.7 229.3L745.0 223.9L738.0 218.7L730.8 213.8L723.5 209.2L715.9 204.9L708.2 201.0L700.3 197.3L692.3 194.0L684.1 191.1L675.9 188.4L667.5 186.2L659.1 184.2L650.5 182.6L641.9 181.4L633.3 180.5L624.7 180.0L616.0 179.8ZM616.0 239.0L622.0 239.1L628.1 239.5L634.1 240.1L640.0 241.0L645.9 242.1L651.8 243.5L657.6 245.1L663.4 246.9L669.0 249.0L674.6 251.3L680.1 253.9L685.4 256.7L690.6 259.7L695.7 262.9L700.7 266.3L705.5 269.9L710.1 273.8L714.6 277.8L718.9 282.0L723.0 286.4L726.9 291.0L730.7 295.7L734.2 300.6L737.5 305.7L740.6 310.9L743.4 316.2L746.1 321.6L748.4 327.2L750.6 332.8L752.5 338.5L754.1 344.4L755.5 350.3L756.6 356.2L757.5 362.2L758.0 368.3L758.4 374.3L758.4 380.4L758.2 386.5L757.7 392.6L756.9 398.7L755.9 404.7L754.6 410.7L753.0 416.6L751.1 422.5L749.0 428.3L746.7 434.0L744.0 439.6L741.1 445.1L738.0 450.4L734.6 455.6L731.0 460.7L727.2 465.6L723.1 470.4L718.8 475.0L714.3 479.4L709.6 483.6L704.7 487.5L699.7 491.3L694.4 494.9L689.0 498.2L683.5 501.3L677.8 504.1L672.0 506.7L666.1 509.0L660.0 511.1L653.9 512.9L647.7 514.4L641.5 515.7L635.1 516.7L628.8 517.4L622.4 517.8L616.0 517.9L609.6 517.8L603.2 517.4L596.9 516.7L590.5 515.7L584.3 514.4L578.1 512.9L572.0 511.1L565.9 509.0L560.0 506.7L554.2 504.1L548.5 501.3L543.0 498.2L537.6 494.9L532.3 491.3L527.3 487.5L522.4 483.6L517.7 479.4L513.2 475.0L508.9 470.4L504.8 465.6L501.0 460.7L497.4 455.6L494.0 450.4L490.9 445.1L488.0 439.6L485.3 434.0L483.0 428.3L480.9 422.5L479.0 416.6L477.4 410.7L476.1 404.7L475.1 398.7L474.3 392.6L473.8 386.5L473.6 380.4L473.6 374.3L474.0 368.3L474.5 362.2L475.4 356.2L476.5 350.3L477.9 344.4L479.5 338.5L481.4 332.8L483.6 327.2L485.9 321.6L488.6 316.2L491.4 310.9L494.5 305.7L497.8 300.6L501.3 295.7L505.1 291.0L509.0 286.4L513.1 282.0L517.4 277.8L521.9 273.8L526.5 269.9L531.3 266.3L536.3 262.9L541.4 259.7L546.6 256.7L551.9 253.9L557.4 251.3L563.0 249.0L568.6 246.9L574.4 245.1L580.2 243.5L586.1 242.1L592.0 241.0L597.9 240.1L603.9 239.5L610.0 239.1ZM610.2 243.4L604.3 243.8L598.5 244.4L592.7 245.2L587.0 246.3L581.3 247.6L575.7 249.2L570.1 251.0L564.7 253.0L559.3 255.2L554.0 257.7L548.8 260.4L543.7 263.3L538.8 266.4L534.0 269.8L529.4 273.3L524.9 277.0L520.5 280.9L516.4 285.0L512.4 289.2L508.6 293.7L505.0 298.3L501.6 303.0L498.4 307.9L495.4 312.9L492.7 318.0L490.1 323.3L487.8 328.7L485.8 334.1L483.9 339.7L482.4 345.3L481.0 351.0L480.0 356.8L479.1 362.6L478.6 368.5L478.3 374.3L478.2 380.2L478.5 386.1L478.9 392.0L479.7 397.9L480.7 403.7L482.0 409.5L483.5 415.2L485.3 420.9L487.4 426.5L489.7 432.0L492.2 437.4L495.0 442.7L498.0 447.9L501.3 452.9L504.8 457.9L508.5 462.6L512.5 467.2L516.6 471.6L521.0 475.9L525.5 479.9L530.2 483.8L535.1 487.4L540.2 490.8L545.4 494.0L550.8 497.0L556.2 499.8L561.9 502.3L567.6 504.5L573.4 506.5L579.3 508.2L585.3 509.7L591.4 510.9L597.5 511.9L603.6 512.6L609.8 513.0L616.0 513.1L622.2 513.0L628.4 512.6L634.5 511.9L640.6 510.9L646.7 509.7L652.7 508.2L658.6 506.5L664.4 504.5L670.1 502.3L675.8 499.8L681.2 497.0L686.6 494.0L691.8 490.8L696.9 487.4L701.8 483.8L706.5 479.9L711.0 475.9L715.4 471.6L719.5 467.2L723.5 462.6L727.2 457.9L730.7 452.9L734.0 447.9L737.0 442.7L739.8 437.4L742.3 432.0L744.6 426.5L746.7 420.9L748.5 415.2L750.0 409.5L751.3 403.7L752.3 397.9L753.1 392.0L753.5 386.1L753.8 380.2L753.7 374.3L753.4 368.5L752.9 362.6L752.0 356.8L751.0 351.0L749.6 345.3L748.1 339.7L746.2 334.1L744.2 328.7L741.9 323.3L739.3 318.0L736.6 312.9L733.6 307.9L730.4 303.0L727.0 298.3L723.4 293.7L719.6 289.2L715.6 285.0L711.5 280.9L707.1 277.0L702.6 273.3L698.0 269.8L693.2 266.4L688.3 263.3L683.2 260.4L678.0 257.7L672.7 255.2L667.3 253.0L661.9 251.0L656.3 249.2L650.7 247.6L645.0 246.3L639.3 245.2L633.5 244.4L627.7 243.8L621.8 243.4L616.0 243.3ZM628.4 240.6L631.9 237.0L634.9 233.1L637.5 228.9L639.6 224.5L641.2 219.9L642.2 215.1L642.7 210.3L642.7 205.5L642.1 200.7L641.0 196.0L639.3 191.5L637.2 187.2L634.6 183.0L631.5 179.2L629.7 180.7L632.6 184.3L635.0 188.2L637.1 192.3L638.6 196.7L639.7 201.1L640.2 205.6L640.3 210.2L639.8 214.8L638.8 219.3L637.3 223.6L635.3 227.8L632.9 231.8L630.0 235.5L626.7 238.9ZM686.7 258.7L691.5 256.9L696.0 254.6L700.3 251.8L704.1 248.7L707.6 245.1L710.7 241.3L713.3 237.1L715.4 232.7L717.1 228.1L718.1 223.4L718.7 218.6L718.7 213.7L718.1 208.9L717.0 204.2L714.7 204.8L715.7 209.3L716.2 213.8L716.2 218.4L715.7 223.0L714.7 227.5L713.2 231.8L711.1 236.0L708.7 239.9L705.7 243.6L702.4 247.0L698.7 250.0L694.7 252.6L690.4 254.7L685.9 256.4ZM732.0 299.5L737.2 299.9L742.4 299.7L747.5 299.0L752.6 297.7L757.4 296.0L762.0 293.8L766.3 291.1L770.2 287.9L773.8 284.4L776.9 280.6L779.6 276.4L781.8 272.0L783.4 267.3L784.5 262.5L782.1 262.1L781.0 266.6L779.5 271.0L777.4 275.2L774.9 279.2L771.9 282.8L768.5 286.2L764.8 289.1L760.7 291.7L756.3 293.8L751.7 295.5L747.0 296.6L742.1 297.3L737.2 297.5L732.3 297.1ZM755.4 356.0L760.0 358.5L764.9 360.6L770.0 362.1L775.2 363.2L780.5 363.6L785.7 363.6L791.0 363.0L796.1 361.8L801.0 360.1L805.7 357.9L810.1 355.2L814.1 352.1L817.8 348.6L821.0 344.7L818.9 343.2L815.9 346.9L812.4 350.3L808.5 353.2L804.4 355.8L799.9 357.8L795.3 359.4L790.4 360.5L785.5 361.1L780.5 361.2L775.5 360.7L770.5 359.8L765.7 358.3L761.1 356.3L756.7 353.9ZM751.4 417.5L754.6 421.9L758.2 425.9L762.2 429.5L766.6 432.7L771.2 435.5L776.2 437.7L781.3 439.4L786.6 440.6L791.9 441.2L797.3 441.3L802.6 440.7L807.8 439.6L812.9 438.0L817.7 435.9L816.4 433.6L811.9 435.6L807.1 437.2L802.2 438.2L797.1 438.7L792.0 438.7L786.9 438.1L781.9 437.0L777.1 435.4L772.4 433.2L767.9 430.6L763.8 427.6L760.0 424.2L756.6 420.3L753.6 416.2ZM720.1 471.9L721.0 477.2L722.5 482.4L724.6 487.5L727.1 492.4L730.2 496.9L733.8 501.1L737.7 505.0L742.1 508.4L746.8 511.3L751.7 513.7L756.9 515.6L762.2 516.9L767.6 517.7L773.1 517.8L773.0 515.2L767.8 515.1L762.6 514.3L757.6 513.1L752.7 511.3L748.0 509.0L743.5 506.2L739.4 503.0L735.6 499.4L732.3 495.4L729.4 491.0L726.9 486.5L725.0 481.7L723.5 476.7L722.6 471.6ZM666.9 507.4L665.4 512.6L664.4 518.0L664.0 523.5L664.2 529.0L665.0 534.5L666.3 539.9L668.2 545.1L670.7 550.1L673.6 554.9L677.1 559.3L681.0 563.3L685.2 566.9L689.9 570.0L694.8 572.6L695.9 570.1L691.2 567.7L686.8 564.7L682.7 561.3L679.0 557.5L675.8 553.3L672.9 548.9L670.6 544.1L668.8 539.1L667.5 534.0L666.8 528.8L666.6 523.6L667.0 518.4L667.9 513.3L669.3 508.3ZM602.9 516.1L599.1 520.1L595.9 524.6L593.1 529.3L590.8 534.4L589.1 539.6L587.9 545.0L587.3 550.6L587.3 556.2L587.8 561.7L589.0 567.2L590.7 572.5L593.0 577.6L595.8 582.5L599.1 587.0L601.1 585.3L598.0 581.0L595.3 576.4L593.2 571.5L591.5 566.5L590.4 561.3L589.9 556.0L589.9 550.7L590.5 545.5L591.6 540.3L593.2 535.3L595.4 530.5L598.0 526.0L601.1 521.8L604.7 518.0ZM541.6 496.0L536.6 498.0L531.7 500.5L527.1 503.5L522.9 507.1L519.0 511.0L515.6 515.3L512.7 520.0L510.2 525.0L508.3 530.2L506.9 535.6L506.1 541.1L505.8 546.7L506.2 552.2L507.1 557.7L509.7 557.0L508.8 551.8L508.5 546.6L508.7 541.3L509.5 536.1L510.8 531.0L512.6 526.0L514.9 521.3L517.7 516.8L521.0 512.7L524.6 509.0L528.7 505.6L533.0 502.7L537.6 500.3L542.4 498.4ZM496.2 451.6L490.8 451.2L485.5 451.4L480.1 452.2L474.9 453.5L469.8 455.4L464.9 457.8L460.2 460.6L455.9 464.0L452.0 467.8L448.4 472.0L445.3 476.5L442.7 481.4L440.6 486.4L439.1 491.7L441.6 492.2L443.1 487.2L445.1 482.4L447.5 477.8L450.5 473.5L453.8 469.5L457.6 465.9L461.7 462.7L466.1 460.0L470.7 457.7L475.6 455.9L480.5 454.7L485.6 454.0L490.7 453.8L495.8 454.2ZM475.6 392.8L471.0 390.3L466.2 388.2L461.2 386.6L456.1 385.6L450.8 385.1L445.5 385.1L440.2 385.8L435.0 386.9L429.9 388.6L425.0 390.9L420.4 393.6L416.0 396.8L412.0 400.4L408.4 404.4L410.3 405.9L413.8 402.1L417.6 398.7L421.7 395.6L426.1 393.1L430.8 391.0L435.6 389.3L440.5 388.2L445.6 387.6L450.6 387.6L455.6 388.0L460.5 389.0L465.3 390.5L469.8 392.5L474.1 394.9ZM483.0 331.9L480.1 327.7L476.8 323.9L473.1 320.4L469.1 317.3L464.7 314.7L460.0 312.6L455.1 311.0L450.1 309.9L444.9 309.3L439.7 309.3L434.5 309.8L429.3 310.8L424.3 312.3L419.4 314.4L420.5 316.5L425.1 314.6L429.9 313.1L434.8 312.1L439.7 311.7L444.7 311.7L449.6 312.3L454.4 313.3L459.0 314.9L463.4 316.9L467.6 319.3L471.5 322.2L475.0 325.5L478.1 329.2L480.8 333.2ZM516.1 280.7L515.4 275.8L514.2 271.0L512.4 266.3L510.2 261.9L507.4 257.8L504.2 254.0L500.6 250.6L496.7 247.5L492.4 244.9L487.9 242.7L483.1 241.0L478.1 239.9L473.0 239.2L467.9 239.1L467.9 241.4L472.8 241.5L477.6 242.2L482.3 243.3L486.8 244.9L491.2 246.9L495.2 249.4L499.0 252.3L502.4 255.6L505.4 259.2L508.0 263.1L510.1 267.3L511.8 271.7L512.9 276.2L513.6 280.9ZM567.8 248.4L569.4 243.7L570.4 238.9L570.9 234.0L570.8 229.2L570.2 224.3L569.0 219.6L567.3 215.1L565.1 210.7L562.5 206.6L559.4 202.8L555.9 199.4L552.0 196.3L547.8 193.7L543.3 191.5L542.3 193.6L546.5 195.7L550.5 198.2L554.2 201.1L557.5 204.4L560.5 208.0L563.0 211.8L565.1 216.0L566.6 220.3L567.7 224.8L568.3 229.3L568.4 234.0L568.0 238.6L567.0 243.1L565.5 247.6Z" fill="#ffed2a" shape-rendering="crispEdges"/>
</g>
<rect x="383" y="61.5" width="51.5" height="51.5" rx="5" fill="url(#btn)"/>
<rect x="447" y="61.5" width="51.5" height="51.5" rx="5" fill="url(#btn)"/>
<rect x="511" y="61.5" width="51.5" height="51.5" rx="5" fill="url(#btn)"/>
<g fill="none" stroke="#fff" stroke-width="2.6" stroke-linejoin="round" stroke-linecap="round">
<path d="M390.5 101V73.5a2 2 0 0 1 2-2h11.500l4 5h15a2 2 0 0 1 2 2v5"/>
<path d="M390.500 101.300L394.800 85.300a2 2 0 0 1 2-1.500h29.700a1.500 1.500 0 0 1 1.400 2L423.500 99.800a2 2 0 0 1-2 1.500H390.500Z"/>
<path d="M473 68.500V94M463 84.500L473 94.500L483 84.500M454.300 95.500V103.500a1.500 1.500 0 0 0 1.500 1.500H490.200a1.500 1.500 0 0 0 1.500-1.500V95.500"/>
</g>
<clipPath id="gc"><path d="M512 62H562V82.600H512ZM512 92.600H562V112H512Z"/></clipPath>
<g fill="none" stroke="#fff" stroke-width="1.5" clip-path="url(#gc)"><ellipse cx="537.4" cy="87.5" rx="19.4" ry="20.2"/><ellipse cx="537.4" cy="87.5" rx="8.8" ry="20.2"/><path d="M537.4 67.300V107.700M520.500 75Q537.400 81 554.300 75M520.500 100Q537.400 94 554.300 100"/></g>
<text x="536.6" y="90.7" font-family="'Liberation Sans',sans-serif" font-size="8.3" fill="#fff" text-anchor="middle" textLength="46.5" lengthAdjust="spacingAndGlyphs">CREALITY</text>
<filter id="ol" x="-5%" y="-20%" width="110%" height="140%"><feMorphology in="SourceAlpha" operator="dilate" radius="1" result="d"/><feFlood flood-color="#000"/><feComposite in2="d" operator="in"/><feMerge><feMergeNode/><feMergeNode in="SourceGraphic"/></feMerge></filter>
<g font-family="'Liberation Sans',sans-serif" font-size="17.75" text-anchor="middle" fill="#fff" stroke="#fff" stroke-width="0.45" filter="url(#ol)">
<text x="472" y="131.5">1 heures 9 minutes</text>
<text x="472" y="149.5">5.32 mètres 16 grammes</text>
<text x="472" y="167.5">0.32</text>
</g>
</svg>
</body>
</html>
